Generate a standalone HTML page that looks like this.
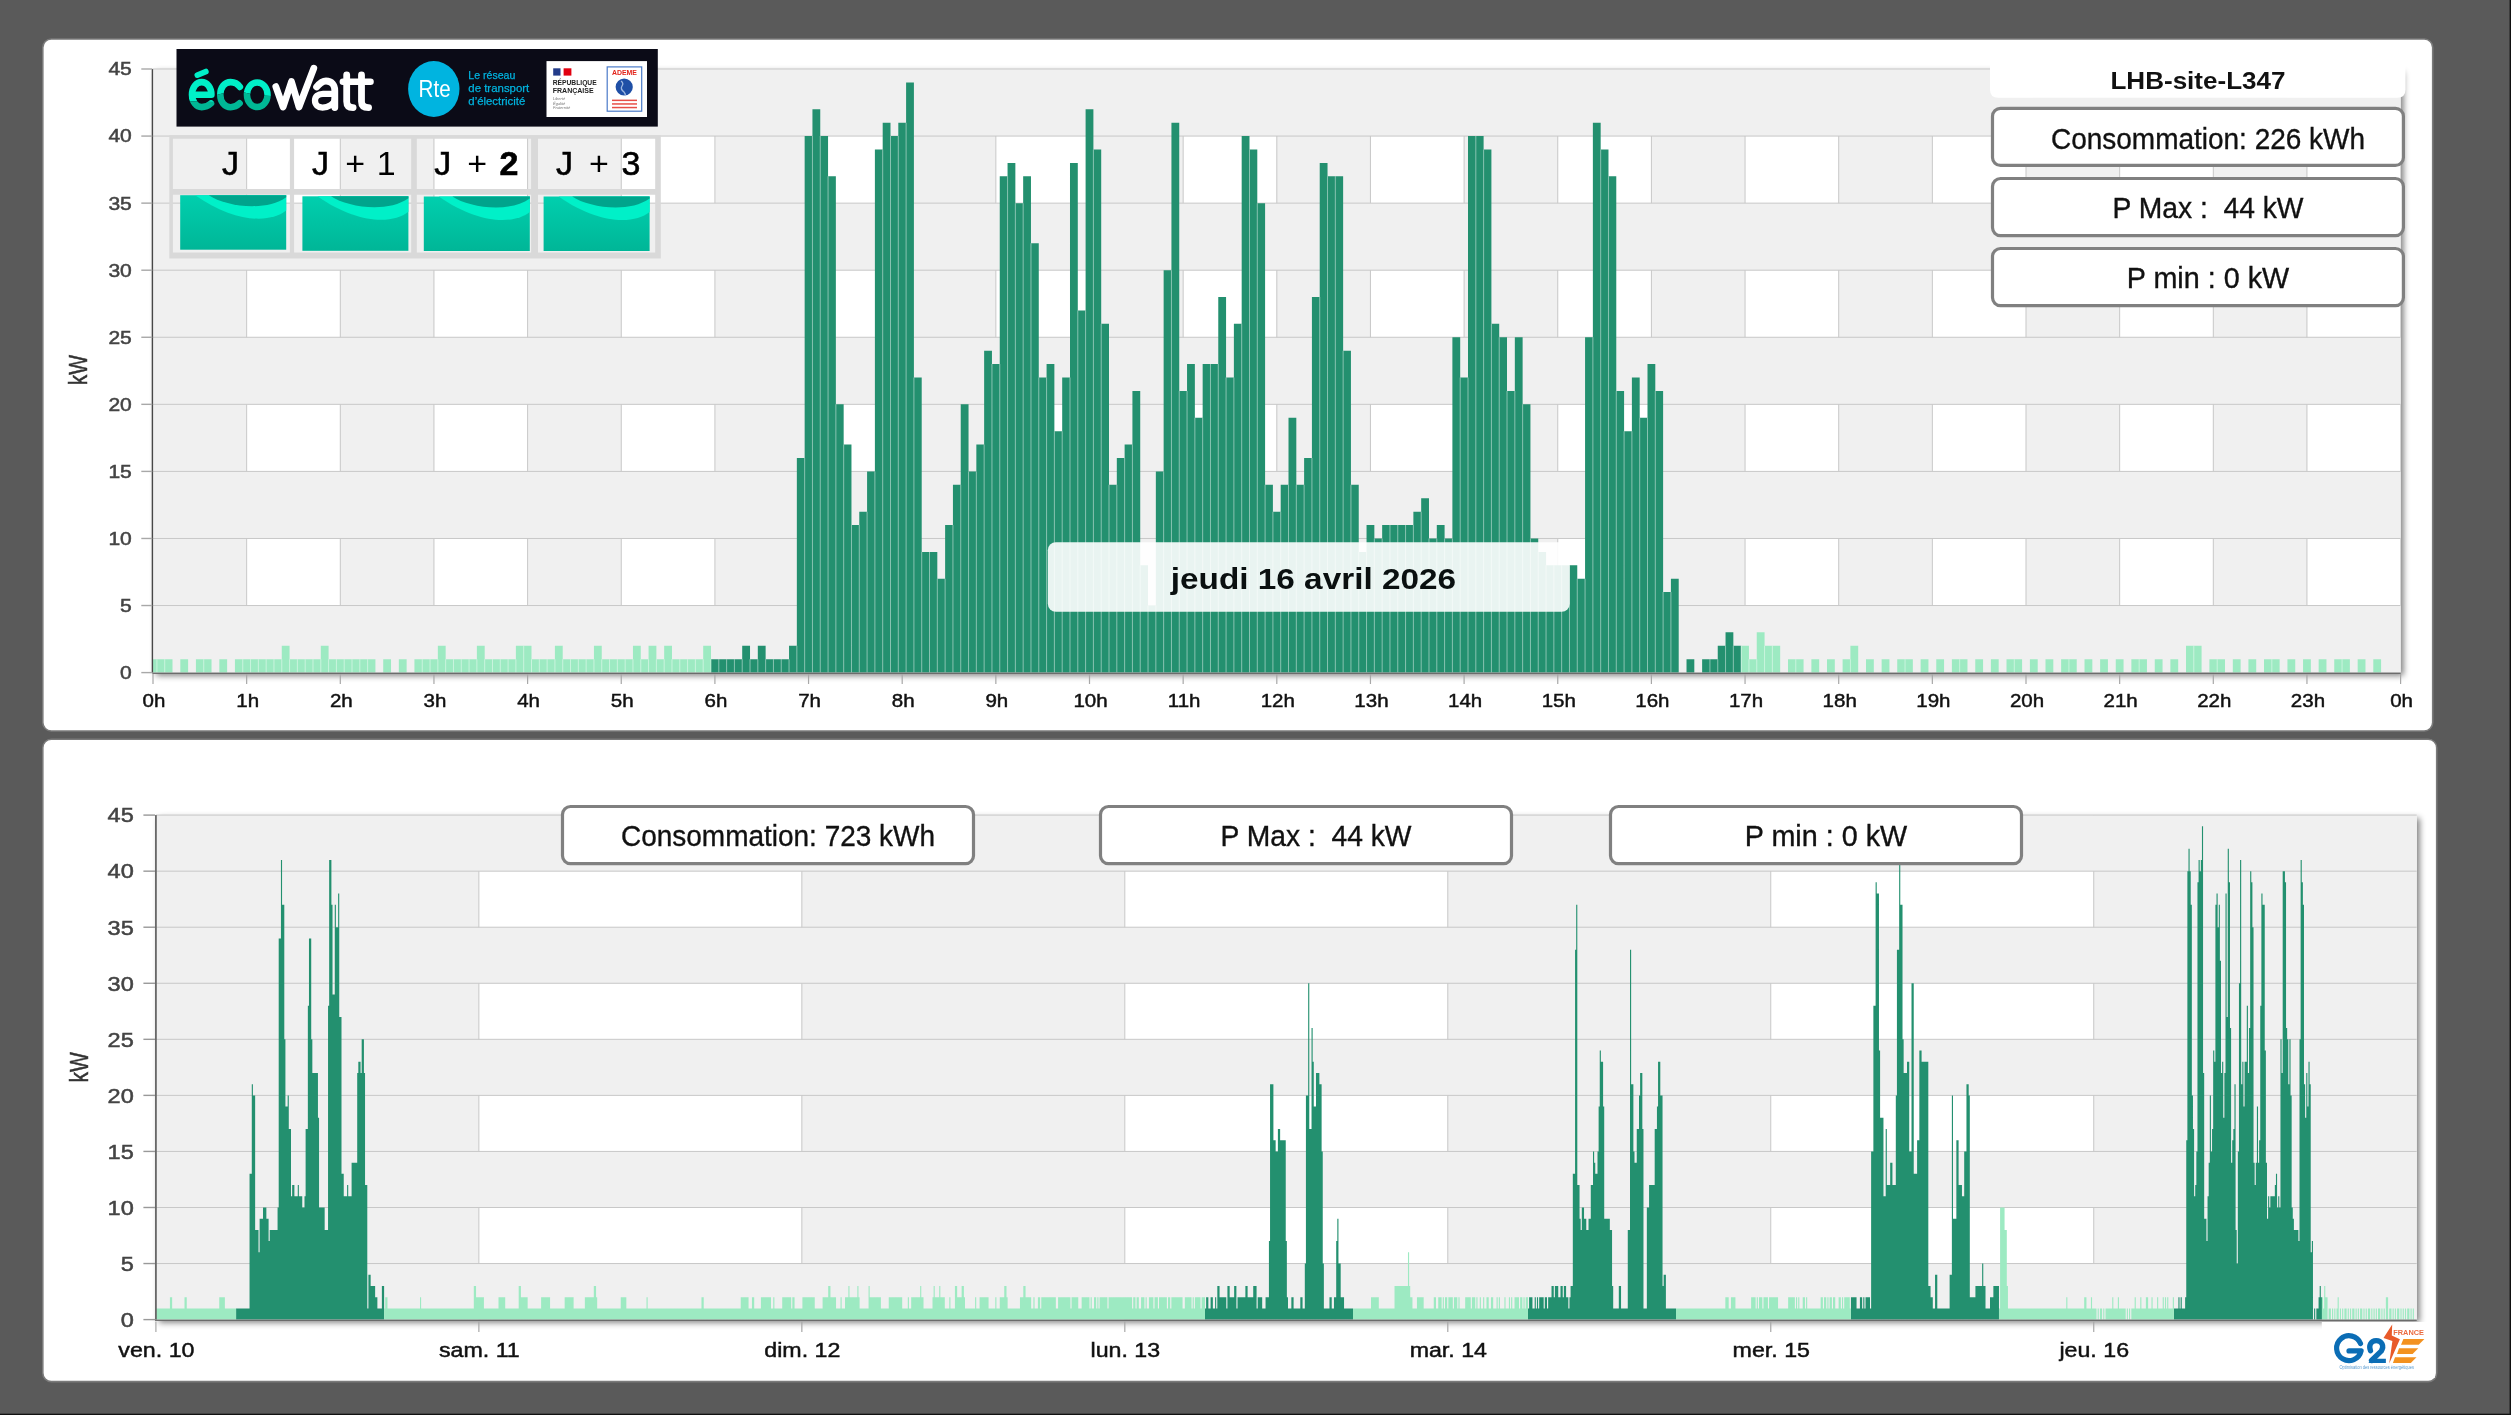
<!DOCTYPE html><html><head><meta charset="utf-8"><title>Consommation</title><style>html,body{margin:0;padding:0;background:#5a5a5a;width:2511px;height:1415px;overflow:hidden}svg{display:block;will-change:transform}text{font-family:"Liberation Sans",sans-serif}</style></head><body>
<svg width="2511" height="1415" viewBox="0 0 2511 1415">
<defs><filter id="sh" x="-5%" y="-50%" width="110%" height="200%"><feGaussianBlur stdDeviation="2"/></filter><filter id="sh3" x="-5%" y="-5%" width="110%" height="110%"><feGaussianBlur stdDeviation="3"/></filter><linearGradient id="tg" x1="0" y1="0" x2="0" y2="1"><stop offset="0" stop-color="#00cfae"/><stop offset="1" stop-color="#00b697"/></linearGradient></defs>
<rect x="0" y="0" width="2511" height="1415" fill="#5a5a5a"/>
<rect x="42.8" y="39" width="2389.9" height="692" rx="8.5" fill="#ffffff" stroke="#7a7a7a" stroke-width="1.6"/>
<rect x="42.8" y="739.3" width="2393.9" height="642.3" rx="8.5" fill="#ffffff" stroke="#7a7a7a" stroke-width="1.6"/>
<rect x="2509.6" y="0" width="1.4" height="1415" fill="#111"/><rect x="0" y="1413.7" width="2511" height="1.3" fill="#111"/>
<rect x="156.0" y="72.0" width="2247.6" height="603.6" fill="#000" opacity="0.5" filter="url(#sh3)"/>
<rect x="153.0" y="69.0" width="2247.6" height="603.6" fill="#ffffff"/>
<rect x="153.00" y="69.0" width="93.65" height="603.60" fill="#f0f0f0"/>
<rect x="340.30" y="69.0" width="93.65" height="603.60" fill="#f0f0f0"/>
<rect x="527.60" y="69.0" width="93.65" height="603.60" fill="#f0f0f0"/>
<rect x="714.90" y="69.0" width="93.65" height="603.60" fill="#f0f0f0"/>
<rect x="902.20" y="69.0" width="93.65" height="603.60" fill="#f0f0f0"/>
<rect x="1089.50" y="69.0" width="93.65" height="603.60" fill="#f0f0f0"/>
<rect x="1276.80" y="69.0" width="93.65" height="603.60" fill="#f0f0f0"/>
<rect x="1464.10" y="69.0" width="93.65" height="603.60" fill="#f0f0f0"/>
<rect x="1651.40" y="69.0" width="93.65" height="603.60" fill="#f0f0f0"/>
<rect x="1838.70" y="69.0" width="93.65" height="603.60" fill="#f0f0f0"/>
<rect x="2026.00" y="69.0" width="93.65" height="603.60" fill="#f0f0f0"/>
<rect x="2213.30" y="69.0" width="93.65" height="603.60" fill="#f0f0f0"/>
<rect x="246.15" y="69.0" width="1" height="603.60" fill="#c8c8c8"/>
<rect x="339.80" y="69.0" width="1" height="603.60" fill="#c8c8c8"/>
<rect x="433.45" y="69.0" width="1" height="603.60" fill="#c8c8c8"/>
<rect x="527.10" y="69.0" width="1" height="603.60" fill="#c8c8c8"/>
<rect x="620.75" y="69.0" width="1" height="603.60" fill="#c8c8c8"/>
<rect x="714.40" y="69.0" width="1" height="603.60" fill="#c8c8c8"/>
<rect x="808.05" y="69.0" width="1" height="603.60" fill="#c8c8c8"/>
<rect x="901.70" y="69.0" width="1" height="603.60" fill="#c8c8c8"/>
<rect x="995.35" y="69.0" width="1" height="603.60" fill="#c8c8c8"/>
<rect x="1089.00" y="69.0" width="1" height="603.60" fill="#c8c8c8"/>
<rect x="1182.65" y="69.0" width="1" height="603.60" fill="#c8c8c8"/>
<rect x="1276.30" y="69.0" width="1" height="603.60" fill="#c8c8c8"/>
<rect x="1369.95" y="69.0" width="1" height="603.60" fill="#c8c8c8"/>
<rect x="1463.60" y="69.0" width="1" height="603.60" fill="#c8c8c8"/>
<rect x="1557.25" y="69.0" width="1" height="603.60" fill="#c8c8c8"/>
<rect x="1650.90" y="69.0" width="1" height="603.60" fill="#c8c8c8"/>
<rect x="1744.55" y="69.0" width="1" height="603.60" fill="#c8c8c8"/>
<rect x="1838.20" y="69.0" width="1" height="603.60" fill="#c8c8c8"/>
<rect x="1931.85" y="69.0" width="1" height="603.60" fill="#c8c8c8"/>
<rect x="2025.50" y="69.0" width="1" height="603.60" fill="#c8c8c8"/>
<rect x="2119.15" y="69.0" width="1" height="603.60" fill="#c8c8c8"/>
<rect x="2212.80" y="69.0" width="1" height="603.60" fill="#c8c8c8"/>
<rect x="2306.45" y="69.0" width="1" height="603.60" fill="#c8c8c8"/>
<rect x="153.0" y="605.53" width="2247.60" height="67.07" fill="#f0f0f0"/>
<rect x="153.0" y="471.40" width="2247.60" height="67.07" fill="#f0f0f0"/>
<rect x="153.0" y="337.27" width="2247.60" height="67.07" fill="#f0f0f0"/>
<rect x="153.0" y="203.13" width="2247.60" height="67.07" fill="#f0f0f0"/>
<rect x="153.0" y="69.00" width="2247.60" height="67.07" fill="#f0f0f0"/>
<rect x="153.0" y="605.03" width="2247.60" height="1" fill="#c8c8c8"/>
<rect x="153.0" y="537.97" width="2247.60" height="1" fill="#c8c8c8"/>
<rect x="153.0" y="470.90" width="2247.60" height="1" fill="#c8c8c8"/>
<rect x="153.0" y="403.83" width="2247.60" height="1" fill="#c8c8c8"/>
<rect x="153.0" y="336.77" width="2247.60" height="1" fill="#c8c8c8"/>
<rect x="153.0" y="269.70" width="2247.60" height="1" fill="#c8c8c8"/>
<rect x="153.0" y="202.63" width="2247.60" height="1" fill="#c8c8c8"/>
<rect x="153.0" y="135.57" width="2247.60" height="1" fill="#c8c8c8"/>
<rect x="153.0" y="68.50" width="2247.60" height="1" fill="#c8c8c8"/>
<path d="M711.00 659.19H718.80V672.6H711.00ZM718.80 659.19H726.61V672.6H718.80ZM726.61 659.19H734.41V672.6H726.61ZM734.41 659.19H742.21V672.6H734.41ZM742.21 645.77H750.02V672.6H742.21ZM750.02 659.19H757.82V672.6H750.02ZM757.82 645.77H765.63V672.6H757.82ZM765.63 659.19H773.43V672.6H765.63ZM773.43 659.19H781.24V672.6H773.43ZM781.24 659.19H789.04V672.6H781.24ZM789.04 645.77H796.84V672.6H789.04ZM796.84 457.99H804.65V672.6H796.84ZM804.65 136.07H812.45V672.6H804.65ZM812.45 109.24H820.26V672.6H812.45ZM820.26 136.07H828.06V672.6H820.26ZM828.06 176.31H835.86V672.6H828.06ZM835.86 404.33H843.67V672.6H835.86ZM843.67 444.57H851.47V672.6H843.67ZM851.47 525.05H859.28V672.6H851.47ZM859.28 511.64H867.08V672.6H859.28ZM867.08 471.40H874.89V672.6H867.08ZM874.89 149.48H882.69V672.6H874.89ZM882.69 122.65H890.49V672.6H882.69ZM890.49 136.07H898.30V672.6H890.49ZM898.30 122.65H906.10V672.6H898.30ZM906.10 82.41H913.91V672.6H906.10ZM913.91 377.51H921.71V672.6H913.91ZM921.71 551.88H929.51V672.6H921.71ZM929.51 551.88H937.32V672.6H929.51ZM937.32 578.71H945.12V672.6H937.32ZM945.12 525.05H952.93V672.6H945.12ZM952.93 484.81H960.73V672.6H952.93ZM960.73 404.33H968.54V672.6H960.73ZM968.54 471.40H976.34V672.6H968.54ZM976.34 444.57H984.14V672.6H976.34ZM984.14 350.68H991.95V672.6H984.14ZM991.95 364.09H999.75V672.6H991.95ZM999.75 176.31H1007.56V672.6H999.75ZM1007.56 162.89H1015.36V672.6H1007.56ZM1015.36 203.13H1023.16V672.6H1015.36ZM1023.16 176.31H1030.97V672.6H1023.16ZM1030.97 243.37H1038.77V672.6H1030.97ZM1038.77 377.51H1046.58V672.6H1038.77ZM1046.58 364.09H1054.38V672.6H1046.58ZM1054.38 431.16H1062.19V672.6H1054.38ZM1062.19 377.51H1069.99V672.6H1062.19ZM1069.99 162.89H1077.79V672.6H1069.99ZM1077.79 310.44H1085.60V672.6H1077.79ZM1085.60 109.24H1093.40V672.6H1085.60ZM1093.40 149.48H1101.21V672.6H1093.40ZM1101.21 323.85H1109.01V672.6H1101.21ZM1109.01 484.81H1116.81V672.6H1109.01ZM1116.81 457.99H1124.62V672.6H1116.81ZM1124.62 444.57H1132.42V672.6H1124.62ZM1132.42 390.92H1140.23V672.6H1132.42ZM1140.23 565.29H1148.03V672.6H1140.23ZM1148.03 605.53H1155.84V672.6H1148.03ZM1155.84 471.40H1163.64V672.6H1155.84ZM1163.64 270.20H1171.44V672.6H1163.64ZM1171.44 122.65H1179.25V672.6H1171.44ZM1179.25 390.92H1187.05V672.6H1179.25ZM1187.05 364.09H1194.86V672.6H1187.05ZM1194.86 417.75H1202.66V672.6H1194.86ZM1202.66 364.09H1210.46V672.6H1202.66ZM1210.46 364.09H1218.27V672.6H1210.46ZM1218.27 297.03H1226.07V672.6H1218.27ZM1226.07 377.51H1233.88V672.6H1226.07ZM1233.88 323.85H1241.68V672.6H1233.88ZM1241.68 136.07H1249.49V672.6H1241.68ZM1249.49 149.48H1257.29V672.6H1249.49ZM1257.29 203.13H1265.09V672.6H1257.29ZM1265.09 484.81H1272.90V672.6H1265.09ZM1272.90 511.64H1280.70V672.6H1272.90ZM1280.70 484.81H1288.51V672.6H1280.70ZM1288.51 417.75H1296.31V672.6H1288.51ZM1296.31 484.81H1304.11V672.6H1296.31ZM1304.11 457.99H1311.92V672.6H1304.11ZM1311.92 297.03H1319.72V672.6H1311.92ZM1319.72 162.89H1327.53V672.6H1319.72ZM1327.53 176.31H1335.33V672.6H1327.53ZM1335.33 176.31H1343.14V672.6H1335.33ZM1343.14 350.68H1350.94V672.6H1343.14ZM1350.94 484.81H1358.74V672.6H1350.94ZM1358.74 551.88H1366.55V672.6H1358.74ZM1366.55 525.05H1374.35V672.6H1366.55ZM1374.35 538.47H1382.16V672.6H1374.35ZM1382.16 525.05H1389.96V672.6H1382.16ZM1389.96 525.05H1397.76V672.6H1389.96ZM1397.76 525.05H1405.57V672.6H1397.76ZM1405.57 525.05H1413.37V672.6H1405.57ZM1413.37 511.64H1421.18V672.6H1413.37ZM1421.18 498.23H1428.98V672.6H1421.18ZM1428.98 538.47H1436.79V672.6H1428.98ZM1436.79 525.05H1444.59V672.6H1436.79ZM1444.59 538.47H1452.39V672.6H1444.59ZM1452.39 337.27H1460.20V672.6H1452.39ZM1460.20 377.51H1468.00V672.6H1460.20ZM1468.00 136.07H1475.81V672.6H1468.00ZM1475.81 136.07H1483.61V672.6H1475.81ZM1483.61 149.48H1491.41V672.6H1483.61ZM1491.41 323.85H1499.22V672.6H1491.41ZM1499.22 337.27H1507.02V672.6H1499.22ZM1507.02 390.92H1514.83V672.6H1507.02ZM1514.83 337.27H1522.63V672.6H1514.83ZM1522.63 404.33H1530.44V672.6H1522.63ZM1530.44 538.47H1538.24V672.6H1530.44ZM1538.24 551.88H1546.04V672.6H1538.24ZM1546.04 565.29H1553.85V672.6H1546.04ZM1553.85 565.29H1561.65V672.6H1553.85ZM1561.65 565.29H1569.46V672.6H1561.65ZM1569.46 565.29H1577.26V672.6H1569.46ZM1577.26 578.71H1585.06V672.6H1577.26ZM1585.06 337.27H1592.87V672.6H1585.06ZM1592.87 122.65H1600.67V672.6H1592.87ZM1600.67 149.48H1608.48V672.6H1600.67ZM1608.48 176.31H1616.28V672.6H1608.48ZM1616.28 390.92H1624.09V672.6H1616.28ZM1624.09 431.16H1631.89V672.6H1624.09ZM1631.89 377.51H1639.69V672.6H1631.89ZM1639.69 417.75H1647.50V672.6H1639.69ZM1647.50 364.09H1655.30V672.6H1647.50ZM1655.30 390.92H1663.11V672.6H1655.30ZM1663.11 592.12H1670.91V672.6H1663.11ZM1670.91 578.71H1678.71V672.6H1670.91ZM1686.52 659.19H1694.32V672.6H1686.52ZM1702.13 659.19H1709.93V672.6H1702.13ZM1709.93 659.19H1717.74V672.6H1709.93ZM1717.74 645.77H1725.54V672.6H1717.74ZM1725.54 632.36H1733.34V672.6H1725.54ZM1733.34 645.77H1741.15V672.6H1733.34Z" fill="#23906f"/>
<path d="M153.00 659.19H156.90V672.6H153.00ZM156.90 659.19H164.71V672.6H156.90ZM164.71 659.19H172.51V672.6H164.71ZM180.31 659.19H188.12V672.6H180.31ZM195.92 659.19H203.73V672.6H195.92ZM203.73 659.19H211.53V672.6H203.73ZM219.34 659.19H227.14V672.6H219.34ZM234.94 659.19H242.75V672.6H234.94ZM242.75 659.19H250.55V672.6H242.75ZM250.55 659.19H258.36V672.6H250.55ZM258.36 659.19H266.16V672.6H258.36ZM266.16 659.19H273.96V672.6H266.16ZM273.96 659.19H281.77V672.6H273.96ZM281.77 645.77H289.57V672.6H281.77ZM289.57 659.19H297.38V672.6H289.57ZM297.38 659.19H305.18V672.6H297.38ZM305.18 659.19H312.99V672.6H305.18ZM312.99 659.19H320.79V672.6H312.99ZM320.79 645.77H328.59V672.6H320.79ZM328.59 659.19H336.40V672.6H328.59ZM336.40 659.19H344.20V672.6H336.40ZM344.20 659.19H352.01V672.6H344.20ZM352.01 659.19H359.81V672.6H352.01ZM359.81 659.19H367.61V672.6H359.81ZM367.61 659.19H375.42V672.6H367.61ZM383.22 659.19H391.03V672.6H383.22ZM398.83 659.19H406.64V672.6H398.83ZM414.44 659.19H422.24V672.6H414.44ZM422.24 659.19H430.05V672.6H422.24ZM430.05 659.19H437.85V672.6H430.05ZM437.85 645.77H445.66V672.6H437.85ZM445.66 659.19H453.46V672.6H445.66ZM453.46 659.19H461.26V672.6H453.46ZM461.26 659.19H469.07V672.6H461.26ZM469.07 659.19H476.87V672.6H469.07ZM476.87 645.77H484.68V672.6H476.87ZM484.68 659.19H492.48V672.6H484.68ZM492.48 659.19H500.29V672.6H492.48ZM500.29 659.19H508.09V672.6H500.29ZM508.09 659.19H515.89V672.6H508.09ZM515.89 645.77H523.70V672.6H515.89ZM523.70 645.77H531.50V672.6H523.70ZM531.50 659.19H539.31V672.6H531.50ZM539.31 659.19H547.11V672.6H539.31ZM547.11 659.19H554.91V672.6H547.11ZM554.91 645.77H562.72V672.6H554.91ZM562.72 659.19H570.52V672.6H562.72ZM570.52 659.19H578.33V672.6H570.52ZM578.33 659.19H586.13V672.6H578.33ZM586.13 659.19H593.94V672.6H586.13ZM593.94 645.77H601.74V672.6H593.94ZM601.74 659.19H609.54V672.6H601.74ZM609.54 659.19H617.35V672.6H609.54ZM617.35 659.19H625.15V672.6H617.35ZM625.15 659.19H632.96V672.6H625.15ZM632.96 645.77H640.76V672.6H632.96ZM640.76 659.19H648.56V672.6H640.76ZM648.56 645.77H656.37V672.6H648.56ZM656.37 659.19H664.17V672.6H656.37ZM664.17 645.77H671.98V672.6H664.17ZM671.98 659.19H679.78V672.6H671.98ZM679.78 659.19H687.59V672.6H679.78ZM687.59 659.19H695.39V672.6H687.59ZM695.39 659.19H703.19V672.6H695.39ZM703.19 645.77H711.00V672.6H703.19ZM1741.15 645.77H1748.95V672.6H1741.15ZM1748.95 659.19H1756.76V672.6H1748.95ZM1756.76 632.36H1764.56V672.6H1756.76ZM1764.56 645.77H1772.36V672.6H1764.56ZM1772.36 645.77H1780.17V672.6H1772.36ZM1787.97 659.19H1795.78V672.6H1787.97ZM1795.78 659.19H1803.58V672.6H1795.78ZM1811.39 659.19H1819.19V672.6H1811.39ZM1826.99 659.19H1834.80V672.6H1826.99ZM1842.60 659.19H1850.41V672.6H1842.60ZM1850.41 645.77H1858.21V672.6H1850.41ZM1866.01 659.19H1873.82V672.6H1866.01ZM1881.62 659.19H1889.43V672.6H1881.62ZM1897.23 659.19H1905.04V672.6H1897.23ZM1905.04 659.19H1912.84V672.6H1905.04ZM1920.64 659.19H1928.45V672.6H1920.64ZM1936.25 659.19H1944.06V672.6H1936.25ZM1951.86 659.19H1959.66V672.6H1951.86ZM1959.66 659.19H1967.47V672.6H1959.66ZM1975.27 659.19H1983.08V672.6H1975.27ZM1990.88 659.19H1998.69V672.6H1990.88ZM2006.49 659.19H2014.29V672.6H2006.49ZM2014.29 659.19H2022.10V672.6H2014.29ZM2029.90 659.19H2037.71V672.6H2029.90ZM2045.51 659.19H2053.31V672.6H2045.51ZM2061.12 659.19H2068.92V672.6H2061.12ZM2068.92 659.19H2076.73V672.6H2068.92ZM2084.53 659.19H2092.34V672.6H2084.53ZM2100.14 659.19H2107.94V672.6H2100.14ZM2115.75 659.19H2123.55V672.6H2115.75ZM2131.36 659.19H2139.16V672.6H2131.36ZM2139.16 659.19H2146.96V672.6H2139.16ZM2154.77 659.19H2162.57V672.6H2154.77ZM2170.38 659.19H2178.18V672.6H2170.38ZM2185.99 645.77H2193.79V672.6H2185.99ZM2193.79 645.77H2201.59V672.6H2193.79ZM2209.40 659.19H2217.20V672.6H2209.40ZM2217.20 659.19H2225.01V672.6H2217.20ZM2232.81 659.19H2240.61V672.6H2232.81ZM2248.42 659.19H2256.22V672.6H2248.42ZM2264.03 659.19H2271.83V672.6H2264.03ZM2271.83 659.19H2279.64V672.6H2271.83ZM2287.44 659.19H2295.24V672.6H2287.44ZM2303.05 659.19H2310.85V672.6H2303.05ZM2318.66 659.19H2326.46V672.6H2318.66ZM2334.26 659.19H2342.07V672.6H2334.26ZM2342.07 659.19H2349.87V672.6H2342.07ZM2357.68 659.19H2365.48V672.6H2357.68ZM2373.29 659.19H2381.09V672.6H2373.29Z" fill="#9deac2"/>
<path d="M156.40 659.19h1V672.6h-1ZM164.21 659.19h1V672.6h-1ZM203.23 659.19h1V672.6h-1ZM242.25 659.19h1V672.6h-1ZM250.05 659.19h1V672.6h-1ZM257.86 659.19h1V672.6h-1ZM265.66 659.19h1V672.6h-1ZM273.46 659.19h1V672.6h-1ZM281.27 659.19h1V672.6h-1ZM289.07 659.19h1V672.6h-1ZM296.88 659.19h1V672.6h-1ZM304.68 659.19h1V672.6h-1ZM312.49 659.19h1V672.6h-1ZM320.29 659.19h1V672.6h-1ZM328.09 659.19h1V672.6h-1ZM335.90 659.19h1V672.6h-1ZM343.70 659.19h1V672.6h-1ZM351.51 659.19h1V672.6h-1ZM359.31 659.19h1V672.6h-1ZM367.11 659.19h1V672.6h-1ZM421.74 659.19h1V672.6h-1ZM429.55 659.19h1V672.6h-1ZM437.35 659.19h1V672.6h-1ZM445.16 659.19h1V672.6h-1ZM452.96 659.19h1V672.6h-1ZM460.76 659.19h1V672.6h-1ZM468.57 659.19h1V672.6h-1ZM476.37 659.19h1V672.6h-1ZM484.18 659.19h1V672.6h-1ZM491.98 659.19h1V672.6h-1ZM499.79 659.19h1V672.6h-1ZM507.59 659.19h1V672.6h-1ZM515.39 659.19h1V672.6h-1ZM523.20 645.77h1V672.6h-1ZM531.00 659.19h1V672.6h-1ZM538.81 659.19h1V672.6h-1ZM546.61 659.19h1V672.6h-1ZM554.41 659.19h1V672.6h-1ZM562.22 659.19h1V672.6h-1ZM570.02 659.19h1V672.6h-1ZM577.83 659.19h1V672.6h-1ZM585.63 659.19h1V672.6h-1ZM593.44 659.19h1V672.6h-1ZM601.24 659.19h1V672.6h-1ZM609.04 659.19h1V672.6h-1ZM616.85 659.19h1V672.6h-1ZM624.65 659.19h1V672.6h-1ZM632.46 659.19h1V672.6h-1ZM640.26 659.19h1V672.6h-1ZM648.06 659.19h1V672.6h-1ZM655.87 659.19h1V672.6h-1ZM663.67 659.19h1V672.6h-1ZM671.48 659.19h1V672.6h-1ZM679.28 659.19h1V672.6h-1ZM687.09 659.19h1V672.6h-1ZM694.89 659.19h1V672.6h-1ZM702.69 659.19h1V672.6h-1ZM710.50 659.19h1V672.6h-1ZM718.30 659.19h1V672.6h-1ZM726.11 659.19h1V672.6h-1ZM733.91 659.19h1V672.6h-1ZM741.71 659.19h1V672.6h-1ZM749.52 659.19h1V672.6h-1ZM757.32 659.19h1V672.6h-1ZM765.13 659.19h1V672.6h-1ZM772.93 659.19h1V672.6h-1ZM780.74 659.19h1V672.6h-1ZM788.54 659.19h1V672.6h-1ZM796.34 645.77h1V672.6h-1ZM804.15 457.99h1V672.6h-1ZM811.95 136.07h1V672.6h-1ZM819.76 136.07h1V672.6h-1ZM827.56 176.31h1V672.6h-1ZM835.36 404.33h1V672.6h-1ZM843.17 444.57h1V672.6h-1ZM850.97 525.05h1V672.6h-1ZM858.78 525.05h1V672.6h-1ZM866.58 511.64h1V672.6h-1ZM874.39 471.40h1V672.6h-1ZM882.19 149.48h1V672.6h-1ZM889.99 136.07h1V672.6h-1ZM897.80 136.07h1V672.6h-1ZM905.60 122.65h1V672.6h-1ZM913.41 377.51h1V672.6h-1ZM921.21 551.88h1V672.6h-1ZM929.01 551.88h1V672.6h-1ZM936.82 578.71h1V672.6h-1ZM944.62 578.71h1V672.6h-1ZM952.43 525.05h1V672.6h-1ZM960.23 484.81h1V672.6h-1ZM968.04 471.40h1V672.6h-1ZM975.84 471.40h1V672.6h-1ZM983.64 444.57h1V672.6h-1ZM991.45 364.09h1V672.6h-1ZM999.25 364.09h1V672.6h-1ZM1007.06 176.31h1V672.6h-1ZM1014.86 203.13h1V672.6h-1ZM1022.66 203.13h1V672.6h-1ZM1030.47 243.37h1V672.6h-1ZM1038.27 377.51h1V672.6h-1ZM1046.08 377.51h1V672.6h-1ZM1053.88 431.16h1V672.6h-1ZM1061.69 431.16h1V672.6h-1ZM1069.49 377.51h1V672.6h-1ZM1077.29 310.44h1V672.6h-1ZM1085.10 310.44h1V672.6h-1ZM1092.90 149.48h1V672.6h-1ZM1100.71 323.85h1V672.6h-1ZM1108.51 484.81h1V672.6h-1ZM1116.31 484.81h1V672.6h-1ZM1124.12 457.99h1V672.6h-1ZM1131.92 444.57h1V672.6h-1ZM1139.73 565.29h1V672.6h-1ZM1147.53 605.53h1V672.6h-1ZM1155.34 605.53h1V672.6h-1ZM1163.14 471.40h1V672.6h-1ZM1170.94 270.20h1V672.6h-1ZM1178.75 390.92h1V672.6h-1ZM1186.55 390.92h1V672.6h-1ZM1194.36 417.75h1V672.6h-1ZM1202.16 417.75h1V672.6h-1ZM1209.96 364.09h1V672.6h-1ZM1217.77 364.09h1V672.6h-1ZM1225.57 377.51h1V672.6h-1ZM1233.38 377.51h1V672.6h-1ZM1241.18 323.85h1V672.6h-1ZM1248.99 149.48h1V672.6h-1ZM1256.79 203.13h1V672.6h-1ZM1264.59 484.81h1V672.6h-1ZM1272.40 511.64h1V672.6h-1ZM1280.20 511.64h1V672.6h-1ZM1288.01 484.81h1V672.6h-1ZM1295.81 484.81h1V672.6h-1ZM1303.61 484.81h1V672.6h-1ZM1311.42 457.99h1V672.6h-1ZM1319.22 297.03h1V672.6h-1ZM1327.03 176.31h1V672.6h-1ZM1334.83 176.31h1V672.6h-1ZM1342.64 350.68h1V672.6h-1ZM1350.44 484.81h1V672.6h-1ZM1358.24 551.88h1V672.6h-1ZM1366.05 551.88h1V672.6h-1ZM1373.85 538.47h1V672.6h-1ZM1381.66 538.47h1V672.6h-1ZM1389.46 525.05h1V672.6h-1ZM1397.26 525.05h1V672.6h-1ZM1405.07 525.05h1V672.6h-1ZM1412.87 525.05h1V672.6h-1ZM1420.68 511.64h1V672.6h-1ZM1428.48 538.47h1V672.6h-1ZM1436.29 538.47h1V672.6h-1ZM1444.09 538.47h1V672.6h-1ZM1451.89 538.47h1V672.6h-1ZM1459.70 377.51h1V672.6h-1ZM1467.50 377.51h1V672.6h-1ZM1475.31 136.07h1V672.6h-1ZM1483.11 149.48h1V672.6h-1ZM1490.91 323.85h1V672.6h-1ZM1498.72 337.27h1V672.6h-1ZM1506.52 390.92h1V672.6h-1ZM1514.33 390.92h1V672.6h-1ZM1522.13 404.33h1V672.6h-1ZM1529.94 538.47h1V672.6h-1ZM1537.74 551.88h1V672.6h-1ZM1545.54 565.29h1V672.6h-1ZM1553.35 565.29h1V672.6h-1ZM1561.15 565.29h1V672.6h-1ZM1568.96 565.29h1V672.6h-1ZM1576.76 578.71h1V672.6h-1ZM1584.56 578.71h1V672.6h-1ZM1592.37 337.27h1V672.6h-1ZM1600.17 149.48h1V672.6h-1ZM1607.98 176.31h1V672.6h-1ZM1615.78 390.92h1V672.6h-1ZM1623.59 431.16h1V672.6h-1ZM1631.39 431.16h1V672.6h-1ZM1639.19 417.75h1V672.6h-1ZM1647.00 417.75h1V672.6h-1ZM1654.80 390.92h1V672.6h-1ZM1662.61 592.12h1V672.6h-1ZM1670.41 592.12h1V672.6h-1ZM1709.43 659.19h1V672.6h-1ZM1717.24 659.19h1V672.6h-1ZM1725.04 645.77h1V672.6h-1ZM1732.84 645.77h1V672.6h-1ZM1740.65 645.77h1V672.6h-1ZM1748.45 659.19h1V672.6h-1ZM1756.26 659.19h1V672.6h-1ZM1764.06 645.77h1V672.6h-1ZM1771.86 645.77h1V672.6h-1ZM1795.28 659.19h1V672.6h-1ZM1849.91 659.19h1V672.6h-1ZM1904.54 659.19h1V672.6h-1ZM1959.16 659.19h1V672.6h-1ZM2013.79 659.19h1V672.6h-1ZM2068.42 659.19h1V672.6h-1ZM2138.66 659.19h1V672.6h-1ZM2193.29 645.77h1V672.6h-1ZM2216.70 659.19h1V672.6h-1ZM2271.33 659.19h1V672.6h-1ZM2341.57 659.19h1V672.6h-1Z" fill="#ffffff" fill-opacity="0.46"/>
<rect x="151.7" y="69.0" width="1.4" height="603.6" fill="#484848"/>
<rect x="141.3" y="671.90" width="11" height="1.4" fill="#a8a8a8"/>
<rect x="141.3" y="604.83" width="11" height="1.4" fill="#a8a8a8"/>
<rect x="141.3" y="537.77" width="11" height="1.4" fill="#a8a8a8"/>
<rect x="141.3" y="470.70" width="11" height="1.4" fill="#a8a8a8"/>
<rect x="141.3" y="403.63" width="11" height="1.4" fill="#a8a8a8"/>
<rect x="141.3" y="336.57" width="11" height="1.4" fill="#a8a8a8"/>
<rect x="141.3" y="269.50" width="11" height="1.4" fill="#a8a8a8"/>
<rect x="141.3" y="202.43" width="11" height="1.4" fill="#a8a8a8"/>
<rect x="141.3" y="135.37" width="11" height="1.4" fill="#a8a8a8"/>
<rect x="141.3" y="68.30" width="11" height="1.4" fill="#a8a8a8"/>
<rect x="152.3" y="672.6" width="2248.2999999999997" height="1.3" fill="#666"/>
<rect x="152.40" y="674" width="1.2" height="10" fill="#a8a8a8"/>
<rect x="246.05" y="674" width="1.2" height="10" fill="#a8a8a8"/>
<rect x="339.70" y="674" width="1.2" height="10" fill="#a8a8a8"/>
<rect x="433.35" y="674" width="1.2" height="10" fill="#a8a8a8"/>
<rect x="527.00" y="674" width="1.2" height="10" fill="#a8a8a8"/>
<rect x="620.65" y="674" width="1.2" height="10" fill="#a8a8a8"/>
<rect x="714.30" y="674" width="1.2" height="10" fill="#a8a8a8"/>
<rect x="807.95" y="674" width="1.2" height="10" fill="#a8a8a8"/>
<rect x="901.60" y="674" width="1.2" height="10" fill="#a8a8a8"/>
<rect x="995.25" y="674" width="1.2" height="10" fill="#a8a8a8"/>
<rect x="1088.90" y="674" width="1.2" height="10" fill="#a8a8a8"/>
<rect x="1182.55" y="674" width="1.2" height="10" fill="#a8a8a8"/>
<rect x="1276.20" y="674" width="1.2" height="10" fill="#a8a8a8"/>
<rect x="1369.85" y="674" width="1.2" height="10" fill="#a8a8a8"/>
<rect x="1463.50" y="674" width="1.2" height="10" fill="#a8a8a8"/>
<rect x="1557.15" y="674" width="1.2" height="10" fill="#a8a8a8"/>
<rect x="1650.80" y="674" width="1.2" height="10" fill="#a8a8a8"/>
<rect x="1744.45" y="674" width="1.2" height="10" fill="#a8a8a8"/>
<rect x="1838.10" y="674" width="1.2" height="10" fill="#a8a8a8"/>
<rect x="1931.75" y="674" width="1.2" height="10" fill="#a8a8a8"/>
<rect x="2025.40" y="674" width="1.2" height="10" fill="#a8a8a8"/>
<rect x="2119.05" y="674" width="1.2" height="10" fill="#a8a8a8"/>
<rect x="2212.70" y="674" width="1.2" height="10" fill="#a8a8a8"/>
<rect x="2306.35" y="674" width="1.2" height="10" fill="#a8a8a8"/>
<rect x="2400.00" y="674" width="1.2" height="10" fill="#a8a8a8"/>
<text transform="translate(131.80,679.00) scale(1.17,1)" x="0" y="0" font-size="18" fill="#444" text-anchor="end" stroke="#444" stroke-width="0.5">0</text>
<text transform="translate(131.80,611.93) scale(1.17,1)" x="0" y="0" font-size="18" fill="#444" text-anchor="end" stroke="#444" stroke-width="0.5">5</text>
<text transform="translate(131.80,544.87) scale(1.17,1)" x="0" y="0" font-size="18" fill="#444" text-anchor="end" stroke="#444" stroke-width="0.5">10</text>
<text transform="translate(131.80,477.80) scale(1.17,1)" x="0" y="0" font-size="18" fill="#444" text-anchor="end" stroke="#444" stroke-width="0.5">15</text>
<text transform="translate(131.80,410.73) scale(1.17,1)" x="0" y="0" font-size="18" fill="#444" text-anchor="end" stroke="#444" stroke-width="0.5">20</text>
<text transform="translate(131.80,343.67) scale(1.17,1)" x="0" y="0" font-size="18" fill="#444" text-anchor="end" stroke="#444" stroke-width="0.5">25</text>
<text transform="translate(131.80,276.60) scale(1.17,1)" x="0" y="0" font-size="18" fill="#444" text-anchor="end" stroke="#444" stroke-width="0.5">30</text>
<text transform="translate(131.80,209.53) scale(1.17,1)" x="0" y="0" font-size="18" fill="#444" text-anchor="end" stroke="#444" stroke-width="0.5">35</text>
<text transform="translate(131.80,142.47) scale(1.17,1)" x="0" y="0" font-size="18" fill="#444" text-anchor="end" stroke="#444" stroke-width="0.5">40</text>
<text transform="translate(131.80,75.40) scale(1.17,1)" x="0" y="0" font-size="18" fill="#444" text-anchor="end" stroke="#444" stroke-width="0.5">45</text>
<text transform="translate(154.00,707.00) scale(1.14,1)" x="0" y="0" font-size="18" fill="#111" text-anchor="middle" stroke="#111" stroke-width="0.45">0h</text>
<text transform="translate(247.65,707.00) scale(1.14,1)" x="0" y="0" font-size="18" fill="#111" text-anchor="middle" stroke="#111" stroke-width="0.45">1h</text>
<text transform="translate(341.30,707.00) scale(1.14,1)" x="0" y="0" font-size="18" fill="#111" text-anchor="middle" stroke="#111" stroke-width="0.45">2h</text>
<text transform="translate(434.95,707.00) scale(1.14,1)" x="0" y="0" font-size="18" fill="#111" text-anchor="middle" stroke="#111" stroke-width="0.45">3h</text>
<text transform="translate(528.60,707.00) scale(1.14,1)" x="0" y="0" font-size="18" fill="#111" text-anchor="middle" stroke="#111" stroke-width="0.45">4h</text>
<text transform="translate(622.25,707.00) scale(1.14,1)" x="0" y="0" font-size="18" fill="#111" text-anchor="middle" stroke="#111" stroke-width="0.45">5h</text>
<text transform="translate(715.90,707.00) scale(1.14,1)" x="0" y="0" font-size="18" fill="#111" text-anchor="middle" stroke="#111" stroke-width="0.45">6h</text>
<text transform="translate(809.55,707.00) scale(1.14,1)" x="0" y="0" font-size="18" fill="#111" text-anchor="middle" stroke="#111" stroke-width="0.45">7h</text>
<text transform="translate(903.20,707.00) scale(1.14,1)" x="0" y="0" font-size="18" fill="#111" text-anchor="middle" stroke="#111" stroke-width="0.45">8h</text>
<text transform="translate(996.85,707.00) scale(1.14,1)" x="0" y="0" font-size="18" fill="#111" text-anchor="middle" stroke="#111" stroke-width="0.45">9h</text>
<text transform="translate(1090.50,707.00) scale(1.14,1)" x="0" y="0" font-size="18" fill="#111" text-anchor="middle" stroke="#111" stroke-width="0.45">10h</text>
<text transform="translate(1184.15,707.00) scale(1.14,1)" x="0" y="0" font-size="18" fill="#111" text-anchor="middle" stroke="#111" stroke-width="0.45">11h</text>
<text transform="translate(1277.80,707.00) scale(1.14,1)" x="0" y="0" font-size="18" fill="#111" text-anchor="middle" stroke="#111" stroke-width="0.45">12h</text>
<text transform="translate(1371.45,707.00) scale(1.14,1)" x="0" y="0" font-size="18" fill="#111" text-anchor="middle" stroke="#111" stroke-width="0.45">13h</text>
<text transform="translate(1465.10,707.00) scale(1.14,1)" x="0" y="0" font-size="18" fill="#111" text-anchor="middle" stroke="#111" stroke-width="0.45">14h</text>
<text transform="translate(1558.75,707.00) scale(1.14,1)" x="0" y="0" font-size="18" fill="#111" text-anchor="middle" stroke="#111" stroke-width="0.45">15h</text>
<text transform="translate(1652.40,707.00) scale(1.14,1)" x="0" y="0" font-size="18" fill="#111" text-anchor="middle" stroke="#111" stroke-width="0.45">16h</text>
<text transform="translate(1746.05,707.00) scale(1.14,1)" x="0" y="0" font-size="18" fill="#111" text-anchor="middle" stroke="#111" stroke-width="0.45">17h</text>
<text transform="translate(1839.70,707.00) scale(1.14,1)" x="0" y="0" font-size="18" fill="#111" text-anchor="middle" stroke="#111" stroke-width="0.45">18h</text>
<text transform="translate(1933.35,707.00) scale(1.14,1)" x="0" y="0" font-size="18" fill="#111" text-anchor="middle" stroke="#111" stroke-width="0.45">19h</text>
<text transform="translate(2027.00,707.00) scale(1.14,1)" x="0" y="0" font-size="18" fill="#111" text-anchor="middle" stroke="#111" stroke-width="0.45">20h</text>
<text transform="translate(2120.65,707.00) scale(1.14,1)" x="0" y="0" font-size="18" fill="#111" text-anchor="middle" stroke="#111" stroke-width="0.45">21h</text>
<text transform="translate(2214.30,707.00) scale(1.14,1)" x="0" y="0" font-size="18" fill="#111" text-anchor="middle" stroke="#111" stroke-width="0.45">22h</text>
<text transform="translate(2307.95,707.00) scale(1.14,1)" x="0" y="0" font-size="18" fill="#111" text-anchor="middle" stroke="#111" stroke-width="0.45">23h</text>
<text transform="translate(2401.60,707.00) scale(1.14,1)" x="0" y="0" font-size="18" fill="#111" text-anchor="middle" stroke="#111" stroke-width="0.45">0h</text>
<text transform="translate(87.4,370.1) rotate(-90) scale(1.05,1.3)" x="0" y="0" font-size="20" fill="#333" stroke="#333" stroke-width="0.35" text-anchor="middle">kW</text>
<rect x="158.9" y="818.1" width="2260.7999999999997" height="504.4999999999999" fill="#000" opacity="0.5" filter="url(#sh3)"/>
<rect x="155.9" y="815.1" width="2260.7999999999997" height="504.4999999999999" fill="#ffffff"/>
<rect x="155.90" y="815.1" width="322.97" height="504.50" fill="#f0f0f0"/>
<rect x="801.84" y="815.1" width="322.97" height="504.50" fill="#f0f0f0"/>
<rect x="1447.79" y="815.1" width="322.97" height="504.50" fill="#f0f0f0"/>
<rect x="2093.73" y="815.1" width="322.97" height="504.50" fill="#f0f0f0"/>
<rect x="478.37" y="815.1" width="1" height="504.50" fill="#c8c8c8"/>
<rect x="801.34" y="815.1" width="1" height="504.50" fill="#c8c8c8"/>
<rect x="1124.31" y="815.1" width="1" height="504.50" fill="#c8c8c8"/>
<rect x="1447.29" y="815.1" width="1" height="504.50" fill="#c8c8c8"/>
<rect x="1770.26" y="815.1" width="1" height="504.50" fill="#c8c8c8"/>
<rect x="2093.23" y="815.1" width="1" height="504.50" fill="#c8c8c8"/>
<rect x="155.9" y="1263.54" width="2260.80" height="56.06" fill="#f0f0f0"/>
<rect x="155.9" y="1151.43" width="2260.80" height="56.06" fill="#f0f0f0"/>
<rect x="155.9" y="1039.32" width="2260.80" height="56.06" fill="#f0f0f0"/>
<rect x="155.9" y="927.21" width="2260.80" height="56.06" fill="#f0f0f0"/>
<rect x="155.9" y="815.10" width="2260.80" height="56.06" fill="#f0f0f0"/>
<rect x="155.9" y="1263.04" width="2260.80" height="1" fill="#c8c8c8"/>
<rect x="155.9" y="1206.99" width="2260.80" height="1" fill="#c8c8c8"/>
<rect x="155.9" y="1150.93" width="2260.80" height="1" fill="#c8c8c8"/>
<rect x="155.9" y="1094.88" width="2260.80" height="1" fill="#c8c8c8"/>
<rect x="155.9" y="1038.82" width="2260.80" height="1" fill="#c8c8c8"/>
<rect x="155.9" y="982.77" width="2260.80" height="1" fill="#c8c8c8"/>
<rect x="155.9" y="926.71" width="2260.80" height="1" fill="#c8c8c8"/>
<rect x="155.9" y="870.66" width="2260.80" height="1" fill="#c8c8c8"/>
<rect x="155.9" y="814.60" width="2260.80" height="1" fill="#c8c8c8"/>
<path d="M236.08 1308.39H237.20V1319.6H236.08ZM237.20 1308.39H238.32V1319.6H237.20ZM238.32 1308.39H239.45V1319.6H238.32ZM239.45 1308.39H240.57V1319.6H239.45ZM240.57 1308.39H241.69V1319.6H240.57ZM241.69 1308.39H242.81V1319.6H241.69ZM242.81 1308.39H243.93V1319.6H242.81ZM243.93 1308.39H245.05V1319.6H243.93ZM245.05 1308.39H246.17V1319.6H245.05ZM246.17 1308.39H247.30V1319.6H246.17ZM247.30 1308.39H248.42V1319.6H247.30ZM248.42 1308.39H249.54V1319.6H248.42ZM249.54 1173.86H250.66V1319.6H249.54ZM250.66 1173.86H251.78V1319.6H250.66ZM251.78 1084.17H252.90V1319.6H251.78ZM252.90 1095.38H254.03V1319.6H252.90ZM254.03 1095.38H255.15V1319.6H254.03ZM255.15 1229.91H256.27V1319.6H255.15ZM256.27 1229.91H257.39V1319.6H256.27ZM257.39 1229.91H258.51V1319.6H257.39ZM258.51 1252.33H259.63V1319.6H258.51ZM259.63 1218.70H260.75V1319.6H259.63ZM260.75 1218.70H261.87V1319.6H260.75ZM261.87 1218.70H263.00V1319.6H261.87ZM263.00 1207.49H264.12V1319.6H263.00ZM264.12 1207.49H265.24V1319.6H264.12ZM265.24 1207.49H266.36V1319.6H265.24ZM266.36 1218.70H267.48V1319.6H266.36ZM267.48 1218.70H268.60V1319.6H267.48ZM268.60 1241.12H269.72V1319.6H268.60ZM269.72 1229.91H270.85V1319.6H269.72ZM270.85 1229.91H271.97V1319.6H270.85ZM271.97 1229.91H273.09V1319.6H271.97ZM273.09 1229.91H274.21V1319.6H273.09ZM274.21 1229.91H275.33V1319.6H274.21ZM275.33 1229.91H276.45V1319.6H275.33ZM276.45 1229.91H277.57V1319.6H276.45ZM277.57 1207.49H278.70V1319.6H277.57ZM278.70 938.42H279.82V1319.6H278.70ZM279.82 938.42H280.94V1319.6H279.82ZM280.94 859.94H282.06V1319.6H280.94ZM282.06 904.79H283.18V1319.6H282.06ZM283.18 904.79H284.30V1319.6H283.18ZM284.30 1039.32H285.42V1319.6H284.30ZM285.42 1106.59H286.55V1319.6H285.42ZM286.55 1106.59H287.67V1319.6H286.55ZM287.67 1095.38H288.79V1319.6H287.67ZM288.79 1129.01H289.91V1319.6H288.79ZM289.91 1129.01H291.03V1319.6H289.91ZM291.03 1196.28H292.15V1319.6H291.03ZM292.15 1185.07H293.27V1319.6H292.15ZM293.27 1185.07H294.40V1319.6H293.27ZM294.40 1196.28H295.52V1319.6H294.40ZM295.52 1196.28H296.64V1319.6H295.52ZM296.64 1196.28H297.76V1319.6H296.64ZM297.76 1185.07H298.88V1319.6H297.76ZM298.88 1196.28H300.00V1319.6H298.88ZM300.00 1196.28H301.12V1319.6H300.00ZM301.12 1196.28H302.25V1319.6H301.12ZM302.25 1207.49H303.37V1319.6H302.25ZM303.37 1207.49H304.49V1319.6H303.37ZM304.49 1196.28H305.61V1319.6H304.49ZM305.61 1129.01H306.73V1319.6H305.61ZM306.73 1129.01H307.85V1319.6H306.73ZM307.85 1005.69H308.97V1319.6H307.85ZM308.97 938.42H310.10V1319.6H308.97ZM310.10 938.42H311.22V1319.6H310.10ZM311.22 1039.32H312.34V1319.6H311.22ZM312.34 1072.96H313.46V1319.6H312.34ZM313.46 1072.96H314.58V1319.6H313.46ZM314.58 1072.96H315.70V1319.6H314.58ZM315.70 1072.96H316.82V1319.6H315.70ZM316.82 1072.96H317.95V1319.6H316.82ZM317.95 1117.80H319.07V1319.6H317.95ZM319.07 1207.49H320.19V1319.6H319.07ZM320.19 1207.49H321.31V1319.6H320.19ZM321.31 1207.49H322.43V1319.6H321.31ZM322.43 1207.49H323.55V1319.6H322.43ZM323.55 1207.49H324.67V1319.6H323.55ZM324.67 1229.91H325.80V1319.6H324.67ZM325.80 1229.91H326.92V1319.6H325.80ZM326.92 1229.91H328.04V1319.6H326.92ZM328.04 1005.69H329.16V1319.6H328.04ZM329.16 859.94H330.28V1319.6H329.16ZM330.28 859.94H331.40V1319.6H330.28ZM331.40 904.79H332.52V1319.6H331.40ZM332.52 994.48H333.65V1319.6H332.52ZM333.65 994.48H334.77V1319.6H333.65ZM334.77 904.79H335.89V1319.6H334.77ZM335.89 927.21H337.01V1319.6H335.89ZM337.01 927.21H338.13V1319.6H337.01ZM338.13 893.58H339.25V1319.6H338.13ZM339.25 1016.90H340.37V1319.6H339.25ZM340.37 1016.90H341.50V1319.6H340.37ZM341.50 1173.86H342.62V1319.6H341.50ZM342.62 1173.86H343.74V1319.6H342.62ZM343.74 1196.28H344.86V1319.6H343.74ZM344.86 1196.28H345.98V1319.6H344.86ZM345.98 1196.28H347.10V1319.6H345.98ZM347.10 1185.07H348.22V1319.6H347.10ZM348.22 1196.28H349.35V1319.6H348.22ZM349.35 1196.28H350.47V1319.6H349.35ZM350.47 1196.28H351.59V1319.6H350.47ZM351.59 1162.64H352.71V1319.6H351.59ZM352.71 1162.64H353.83V1319.6H352.71ZM353.83 1162.64H354.95V1319.6H353.83ZM354.95 1162.64H356.07V1319.6H354.95ZM356.07 1162.64H357.20V1319.6H356.07ZM357.20 1072.96H358.32V1319.6H357.20ZM358.32 1061.74H359.44V1319.6H358.32ZM359.44 1061.74H360.56V1319.6H359.44ZM360.56 1072.96H361.68V1319.6H360.56ZM361.68 1039.32H362.80V1319.6H361.68ZM362.80 1039.32H363.92V1319.6H362.80ZM363.92 1072.96H365.05V1319.6H363.92ZM365.05 1185.07H366.17V1319.6H365.05ZM366.17 1185.07H367.29V1319.6H366.17ZM367.29 1308.39H368.41V1319.6H367.29ZM368.41 1274.76H369.53V1319.6H368.41ZM369.53 1274.76H370.65V1319.6H369.53ZM370.65 1285.97H371.77V1319.6H370.65ZM371.77 1285.97H372.90V1319.6H371.77ZM372.90 1285.97H374.02V1319.6H372.90ZM374.02 1285.97H375.14V1319.6H374.02ZM375.14 1297.18H376.26V1319.6H375.14ZM376.26 1297.18H377.38V1319.6H376.26ZM377.38 1308.39H378.50V1319.6H377.38ZM378.50 1308.39H379.62V1319.6H378.50ZM379.62 1308.39H380.75V1319.6H379.62ZM380.75 1308.39H381.87V1319.6H380.75ZM381.87 1285.97H382.99V1319.6H381.87ZM382.99 1285.97H384.11V1319.6H382.99ZM1205.00 1308.39H1206.12V1319.6H1205.00ZM1206.12 1297.18H1207.24V1319.6H1206.12ZM1207.24 1297.18H1208.36V1319.6H1207.24ZM1208.36 1308.39H1209.48V1319.6H1208.36ZM1209.48 1308.39H1210.60V1319.6H1209.48ZM1210.60 1297.18H1211.72V1319.6H1210.60ZM1211.72 1297.18H1212.85V1319.6H1211.72ZM1212.85 1308.39H1213.97V1319.6H1212.85ZM1213.97 1308.39H1215.09V1319.6H1213.97ZM1215.09 1297.18H1216.21V1319.6H1215.09ZM1216.21 1308.39H1217.33V1319.6H1216.21ZM1217.33 1285.97H1218.45V1319.6H1217.33ZM1218.45 1285.97H1219.57V1319.6H1218.45ZM1219.57 1297.18H1220.70V1319.6H1219.57ZM1220.70 1297.18H1221.82V1319.6H1220.70ZM1221.82 1297.18H1222.94V1319.6H1221.82ZM1222.94 1297.18H1224.06V1319.6H1222.94ZM1224.06 1297.18H1225.18V1319.6H1224.06ZM1225.18 1297.18H1226.30V1319.6H1225.18ZM1226.30 1308.39H1227.42V1319.6H1226.30ZM1227.42 1285.97H1228.55V1319.6H1227.42ZM1228.55 1285.97H1229.67V1319.6H1228.55ZM1229.67 1297.18H1230.79V1319.6H1229.67ZM1230.79 1297.18H1231.91V1319.6H1230.79ZM1231.91 1297.18H1233.03V1319.6H1231.91ZM1233.03 1297.18H1234.15V1319.6H1233.03ZM1234.15 1285.97H1235.27V1319.6H1234.15ZM1235.27 1285.97H1236.40V1319.6H1235.27ZM1236.40 1308.39H1237.52V1319.6H1236.40ZM1237.52 1297.18H1238.64V1319.6H1237.52ZM1238.64 1297.18H1239.76V1319.6H1238.64ZM1239.76 1297.18H1240.88V1319.6H1239.76ZM1240.88 1297.18H1242.00V1319.6H1240.88ZM1242.00 1297.18H1243.12V1319.6H1242.00ZM1243.12 1297.18H1244.25V1319.6H1243.12ZM1244.25 1297.18H1245.37V1319.6H1244.25ZM1245.37 1285.97H1246.49V1319.6H1245.37ZM1246.49 1285.97H1247.61V1319.6H1246.49ZM1247.61 1297.18H1248.73V1319.6H1247.61ZM1248.73 1297.18H1249.85V1319.6H1248.73ZM1249.85 1297.18H1250.97V1319.6H1249.85ZM1250.97 1297.18H1252.10V1319.6H1250.97ZM1252.10 1297.18H1253.22V1319.6H1252.10ZM1253.22 1285.97H1254.34V1319.6H1253.22ZM1254.34 1285.97H1255.46V1319.6H1254.34ZM1255.46 1285.97H1256.58V1319.6H1255.46ZM1256.58 1308.39H1257.70V1319.6H1256.58ZM1257.70 1297.18H1258.82V1319.6H1257.70ZM1258.82 1297.18H1259.95V1319.6H1258.82ZM1259.95 1297.18H1261.07V1319.6H1259.95ZM1261.07 1297.18H1262.19V1319.6H1261.07ZM1262.19 1308.39H1263.31V1319.6H1262.19ZM1263.31 1308.39H1264.43V1319.6H1263.31ZM1264.43 1308.39H1265.55V1319.6H1264.43ZM1265.55 1297.18H1266.67V1319.6H1265.55ZM1266.67 1297.18H1267.80V1319.6H1266.67ZM1267.80 1297.18H1268.92V1319.6H1267.80ZM1268.92 1241.12H1270.04V1319.6H1268.92ZM1270.04 1084.17H1271.16V1319.6H1270.04ZM1271.16 1084.17H1272.28V1319.6H1271.16ZM1272.28 1084.17H1273.40V1319.6H1272.28ZM1273.40 1140.22H1274.52V1319.6H1273.40ZM1274.52 1140.22H1275.65V1319.6H1274.52ZM1275.65 1151.43H1276.77V1319.6H1275.65ZM1276.77 1151.43H1277.89V1319.6H1276.77ZM1277.89 1129.01H1279.01V1319.6H1277.89ZM1279.01 1129.01H1280.13V1319.6H1279.01ZM1280.13 1140.22H1281.25V1319.6H1280.13ZM1281.25 1140.22H1282.38V1319.6H1281.25ZM1282.37 1140.22H1283.50V1319.6H1282.37ZM1283.50 1140.22H1284.62V1319.6H1283.50ZM1284.62 1140.22H1285.74V1319.6H1284.62ZM1285.74 1241.12H1286.86V1319.6H1285.74ZM1286.86 1297.18H1287.98V1319.6H1286.86ZM1287.98 1308.39H1289.10V1319.6H1287.98ZM1289.10 1308.39H1290.22V1319.6H1289.10ZM1290.22 1308.39H1291.35V1319.6H1290.22ZM1291.35 1297.18H1292.47V1319.6H1291.35ZM1292.47 1297.18H1293.59V1319.6H1292.47ZM1293.59 1308.39H1294.71V1319.6H1293.59ZM1294.71 1308.39H1295.83V1319.6H1294.71ZM1295.83 1308.39H1296.95V1319.6H1295.83ZM1296.95 1308.39H1298.07V1319.6H1296.95ZM1298.07 1308.39H1299.20V1319.6H1298.07ZM1299.20 1308.39H1300.32V1319.6H1299.20ZM1300.32 1297.18H1301.44V1319.6H1300.32ZM1301.44 1297.18H1302.56V1319.6H1301.44ZM1302.56 1308.39H1303.68V1319.6H1302.56ZM1303.68 1308.39H1304.80V1319.6H1303.68ZM1304.80 1263.54H1305.92V1319.6H1304.80ZM1305.92 1095.38H1307.05V1319.6H1305.92ZM1307.05 1095.38H1308.17V1319.6H1307.05ZM1308.17 983.27H1309.29V1319.6H1308.17ZM1309.29 1129.01H1310.41V1319.6H1309.29ZM1310.41 1129.01H1311.53V1319.6H1310.41ZM1311.53 1028.11H1312.65V1319.6H1311.53ZM1312.65 1061.74H1313.77V1319.6H1312.65ZM1313.77 1106.59H1314.90V1319.6H1313.77ZM1314.90 1106.59H1316.02V1319.6H1314.90ZM1316.02 1072.96H1317.14V1319.6H1316.02ZM1317.14 1072.96H1318.26V1319.6H1317.14ZM1318.26 1072.96H1319.38V1319.6H1318.26ZM1319.38 1084.17H1320.50V1319.6H1319.38ZM1320.50 1084.17H1321.62V1319.6H1320.50ZM1321.62 1151.43H1322.75V1319.6H1321.62ZM1322.75 1263.54H1323.87V1319.6H1322.75ZM1323.87 1308.39H1324.99V1319.6H1323.87ZM1324.99 1308.39H1326.11V1319.6H1324.99ZM1326.11 1308.39H1327.23V1319.6H1326.11ZM1327.23 1308.39H1328.35V1319.6H1327.23ZM1328.35 1308.39H1329.47V1319.6H1328.35ZM1329.47 1297.18H1330.60V1319.6H1329.47ZM1330.60 1297.18H1331.72V1319.6H1330.60ZM1331.72 1308.39H1332.84V1319.6H1331.72ZM1332.84 1308.39H1333.96V1319.6H1332.84ZM1333.96 1297.18H1335.08V1319.6H1333.96ZM1335.08 1297.18H1336.20V1319.6H1335.08ZM1336.20 1241.12H1337.32V1319.6H1336.20ZM1337.32 1218.70H1338.45V1319.6H1337.32ZM1338.45 1263.54H1339.57V1319.6H1338.45ZM1339.57 1263.54H1340.69V1319.6H1339.57ZM1340.69 1297.18H1341.81V1319.6H1340.69ZM1341.81 1297.18H1342.93V1319.6H1341.81ZM1342.93 1297.18H1344.05V1319.6H1342.93ZM1344.05 1308.39H1345.17V1319.6H1344.05ZM1345.17 1308.39H1346.30V1319.6H1345.17ZM1346.30 1308.39H1347.42V1319.6H1346.30ZM1347.42 1308.39H1348.54V1319.6H1347.42ZM1348.54 1308.39H1349.66V1319.6H1348.54ZM1349.66 1308.39H1350.78V1319.6H1349.66ZM1350.78 1308.39H1351.90V1319.6H1350.78ZM1351.90 1308.39H1353.02V1319.6H1351.90ZM1527.97 1308.39H1529.09V1319.6H1527.97ZM1529.09 1297.18H1530.21V1319.6H1529.09ZM1530.21 1297.18H1531.33V1319.6H1530.21ZM1531.33 1297.18H1532.45V1319.6H1531.33ZM1532.45 1308.39H1533.57V1319.6H1532.45ZM1533.57 1308.39H1534.70V1319.6H1533.57ZM1534.70 1297.18H1535.82V1319.6H1534.70ZM1535.82 1308.39H1536.94V1319.6H1535.82ZM1536.94 1297.18H1538.06V1319.6H1536.94ZM1538.06 1308.39H1539.18V1319.6H1538.06ZM1539.18 1297.18H1540.30V1319.6H1539.18ZM1540.30 1297.18H1541.42V1319.6H1540.30ZM1541.42 1297.18H1542.55V1319.6H1541.42ZM1542.55 1297.18H1543.67V1319.6H1542.55ZM1543.67 1308.39H1544.79V1319.6H1543.67ZM1544.79 1297.18H1545.91V1319.6H1544.79ZM1545.91 1297.18H1547.03V1319.6H1545.91ZM1547.03 1308.39H1548.15V1319.6H1547.03ZM1548.15 1297.18H1549.27V1319.6H1548.15ZM1549.27 1297.18H1550.40V1319.6H1549.27ZM1550.40 1297.18H1551.52V1319.6H1550.40ZM1551.52 1285.97H1552.64V1319.6H1551.52ZM1552.64 1285.97H1553.76V1319.6H1552.64ZM1553.76 1297.18H1554.88V1319.6H1553.76ZM1554.88 1285.97H1556.00V1319.6H1554.88ZM1556.00 1285.97H1557.12V1319.6H1556.00ZM1557.12 1285.97H1558.25V1319.6H1557.12ZM1558.25 1297.18H1559.37V1319.6H1558.25ZM1559.37 1297.18H1560.49V1319.6H1559.37ZM1560.49 1285.97H1561.61V1319.6H1560.49ZM1561.61 1285.97H1562.73V1319.6H1561.61ZM1562.73 1297.18H1563.85V1319.6H1562.73ZM1563.85 1285.97H1564.97V1319.6H1563.85ZM1564.97 1285.97H1566.10V1319.6H1564.97ZM1566.10 1297.18H1567.22V1319.6H1566.10ZM1567.22 1297.18H1568.34V1319.6H1567.22ZM1568.34 1308.39H1569.46V1319.6H1568.34ZM1569.46 1297.18H1570.58V1319.6H1569.46ZM1570.58 1285.97H1571.70V1319.6H1570.58ZM1571.70 1285.97H1572.82V1319.6H1571.70ZM1572.82 1173.86H1573.95V1319.6H1572.82ZM1573.95 1173.86H1575.07V1319.6H1573.95ZM1575.07 949.63H1576.19V1319.6H1575.07ZM1576.19 904.79H1577.31V1319.6H1576.19ZM1577.31 1185.07H1578.43V1319.6H1577.31ZM1578.43 1185.07H1579.55V1319.6H1578.43ZM1579.55 1218.70H1580.67V1319.6H1579.55ZM1580.67 1229.91H1581.80V1319.6H1580.67ZM1581.80 1207.49H1582.92V1319.6H1581.80ZM1582.92 1207.49H1584.04V1319.6H1582.92ZM1584.04 1218.70H1585.16V1319.6H1584.04ZM1585.16 1218.70H1586.28V1319.6H1585.16ZM1586.28 1229.91H1587.40V1319.6H1586.28ZM1587.40 1229.91H1588.52V1319.6H1587.40ZM1588.52 1218.70H1589.65V1319.6H1588.52ZM1589.65 1218.70H1590.77V1319.6H1589.65ZM1590.77 1185.07H1591.89V1319.6H1590.77ZM1591.89 1185.07H1593.01V1319.6H1591.89ZM1593.01 1151.43H1594.13V1319.6H1593.01ZM1594.13 1162.64H1595.25V1319.6H1594.13ZM1595.25 1173.86H1596.37V1319.6H1595.25ZM1596.37 1173.86H1597.50V1319.6H1596.37ZM1597.50 1151.43H1598.62V1319.6H1597.50ZM1598.62 1106.59H1599.74V1319.6H1598.62ZM1599.74 1050.53H1600.86V1319.6H1599.74ZM1600.86 1061.74H1601.98V1319.6H1600.86ZM1601.98 1061.74H1603.10V1319.6H1601.98ZM1603.10 1106.59H1604.22V1319.6H1603.10ZM1604.22 1218.70H1605.35V1319.6H1604.22ZM1605.35 1218.70H1606.47V1319.6H1605.35ZM1606.47 1218.70H1607.59V1319.6H1606.47ZM1607.59 1218.70H1608.71V1319.6H1607.59ZM1608.71 1218.70H1609.83V1319.6H1608.71ZM1609.83 1229.91H1610.95V1319.6H1609.83ZM1610.95 1229.91H1612.07V1319.6H1610.95ZM1612.07 1285.97H1613.20V1319.6H1612.07ZM1613.20 1308.39H1614.32V1319.6H1613.20ZM1614.32 1308.39H1615.44V1319.6H1614.32ZM1615.44 1308.39H1616.56V1319.6H1615.44ZM1616.56 1308.39H1617.68V1319.6H1616.56ZM1617.68 1308.39H1618.80V1319.6H1617.68ZM1618.80 1285.97H1619.92V1319.6H1618.80ZM1619.92 1285.97H1621.05V1319.6H1619.92ZM1621.05 1308.39H1622.17V1319.6H1621.05ZM1622.17 1308.39H1623.29V1319.6H1622.17ZM1623.29 1308.39H1624.41V1319.6H1623.29ZM1624.41 1308.39H1625.53V1319.6H1624.41ZM1625.53 1308.39H1626.65V1319.6H1625.53ZM1626.65 1308.39H1627.77V1319.6H1626.65ZM1627.77 1229.91H1628.90V1319.6H1627.77ZM1628.90 1229.91H1630.02V1319.6H1628.90ZM1630.02 949.63H1631.14V1319.6H1630.02ZM1631.14 1084.17H1632.26V1319.6H1631.14ZM1632.26 1084.17H1633.38V1319.6H1632.26ZM1633.38 1151.43H1634.50V1319.6H1633.38ZM1634.50 1162.64H1635.62V1319.6H1634.50ZM1635.62 1162.64H1636.75V1319.6H1635.62ZM1636.75 1129.01H1637.87V1319.6H1636.75ZM1637.87 1129.01H1638.99V1319.6H1637.87ZM1638.99 1095.38H1640.11V1319.6H1638.99ZM1640.11 1072.96H1641.23V1319.6H1640.11ZM1641.23 1072.96H1642.35V1319.6H1641.23ZM1642.35 1129.01H1643.47V1319.6H1642.35ZM1643.47 1308.39H1644.60V1319.6H1643.47ZM1644.60 1308.39H1645.72V1319.6H1644.60ZM1645.72 1308.39H1646.84V1319.6H1645.72ZM1646.84 1207.49H1647.96V1319.6H1646.84ZM1647.96 1207.49H1649.08V1319.6H1647.96ZM1649.08 1185.07H1650.20V1319.6H1649.08ZM1650.20 1185.07H1651.32V1319.6H1650.20ZM1651.32 1185.07H1652.45V1319.6H1651.32ZM1652.45 1185.07H1653.57V1319.6H1652.45ZM1653.57 1185.07H1654.69V1319.6H1653.57ZM1654.69 1129.01H1655.81V1319.6H1654.69ZM1655.81 1129.01H1656.93V1319.6H1655.81ZM1656.93 1106.59H1658.05V1319.6H1656.93ZM1658.05 1061.74H1659.17V1319.6H1658.05ZM1659.17 1061.74H1660.30V1319.6H1659.17ZM1660.30 1095.38H1661.42V1319.6H1660.30ZM1661.42 1095.38H1662.54V1319.6H1661.42ZM1662.54 1285.97H1663.66V1319.6H1662.54ZM1663.66 1274.76H1664.78V1319.6H1663.66ZM1664.78 1274.76H1665.90V1319.6H1664.78ZM1665.90 1308.39H1667.02V1319.6H1665.90ZM1667.02 1308.39H1668.15V1319.6H1667.02ZM1668.15 1308.39H1669.27V1319.6H1668.15ZM1669.27 1308.39H1670.39V1319.6H1669.27ZM1670.39 1308.39H1671.51V1319.6H1670.39ZM1671.51 1308.39H1672.63V1319.6H1671.51ZM1672.63 1308.39H1673.75V1319.6H1672.63ZM1673.75 1308.39H1674.87V1319.6H1673.75ZM1674.87 1308.39H1676.00V1319.6H1674.87ZM1850.94 1297.18H1852.06V1319.6H1850.94ZM1852.06 1297.18H1853.18V1319.6H1852.06ZM1853.18 1297.18H1854.30V1319.6H1853.18ZM1854.30 1297.18H1855.42V1319.6H1854.30ZM1855.42 1297.18H1856.55V1319.6H1855.42ZM1856.55 1308.39H1857.67V1319.6H1856.55ZM1857.67 1308.39H1858.79V1319.6H1857.67ZM1858.79 1308.39H1859.91V1319.6H1858.79ZM1859.91 1297.18H1861.03V1319.6H1859.91ZM1861.03 1297.18H1862.15V1319.6H1861.03ZM1862.15 1308.39H1863.27V1319.6H1862.15ZM1863.27 1297.18H1864.40V1319.6H1863.27ZM1864.40 1308.39H1865.52V1319.6H1864.40ZM1865.52 1297.18H1866.64V1319.6H1865.52ZM1866.64 1297.18H1867.76V1319.6H1866.64ZM1867.76 1297.18H1868.88V1319.6H1867.76ZM1868.88 1297.18H1870.00V1319.6H1868.88ZM1870.00 1308.39H1871.12V1319.6H1870.00ZM1871.12 1151.43H1872.25V1319.6H1871.12ZM1872.25 1151.43H1873.37V1319.6H1872.25ZM1873.37 1005.69H1874.49V1319.6H1873.37ZM1874.49 1005.69H1875.61V1319.6H1874.49ZM1875.61 882.37H1876.73V1319.6H1875.61ZM1876.73 893.58H1877.85V1319.6H1876.73ZM1877.85 893.58H1878.97V1319.6H1877.85ZM1878.97 1050.53H1880.10V1319.6H1878.97ZM1880.10 1117.80H1881.22V1319.6H1880.10ZM1881.22 1117.80H1882.34V1319.6H1881.22ZM1882.34 1117.80H1883.46V1319.6H1882.34ZM1883.46 1196.28H1884.58V1319.6H1883.46ZM1884.58 1196.28H1885.70V1319.6H1884.58ZM1885.70 1129.01H1886.82V1319.6H1885.70ZM1886.82 1185.07H1887.95V1319.6H1886.82ZM1887.95 1185.07H1889.07V1319.6H1887.95ZM1889.07 1185.07H1890.19V1319.6H1889.07ZM1890.19 1162.64H1891.31V1319.6H1890.19ZM1891.31 1162.64H1892.43V1319.6H1891.31ZM1892.43 1185.07H1893.55V1319.6H1892.43ZM1893.55 1185.07H1894.67V1319.6H1893.55ZM1894.67 1185.07H1895.80V1319.6H1894.67ZM1895.80 1095.38H1896.92V1319.6H1895.80ZM1896.92 949.63H1898.04V1319.6H1896.92ZM1898.04 949.63H1899.16V1319.6H1898.04ZM1899.16 859.94H1900.28V1319.6H1899.16ZM1900.28 904.79H1901.40V1319.6H1900.28ZM1901.40 904.79H1902.52V1319.6H1901.40ZM1902.52 1039.32H1903.65V1319.6H1902.52ZM1903.65 1072.96H1904.77V1319.6H1903.65ZM1904.77 1072.96H1905.89V1319.6H1904.77ZM1905.89 1072.96H1907.01V1319.6H1905.89ZM1907.01 1061.74H1908.13V1319.6H1907.01ZM1908.13 1061.74H1909.25V1319.6H1908.13ZM1909.25 1151.43H1910.37V1319.6H1909.25ZM1910.37 1151.43H1911.50V1319.6H1910.37ZM1911.50 983.27H1912.62V1319.6H1911.50ZM1912.62 983.27H1913.74V1319.6H1912.62ZM1913.74 1173.86H1914.86V1319.6H1913.74ZM1914.86 1173.86H1915.98V1319.6H1914.86ZM1915.98 1173.86H1917.10V1319.6H1915.98ZM1917.10 1140.22H1918.22V1319.6H1917.10ZM1918.22 1140.22H1919.35V1319.6H1918.22ZM1919.35 1050.53H1920.47V1319.6H1919.35ZM1920.47 1050.53H1921.59V1319.6H1920.47ZM1921.59 1061.74H1922.71V1319.6H1921.59ZM1922.71 1061.74H1923.83V1319.6H1922.71ZM1923.83 1061.74H1924.95V1319.6H1923.83ZM1924.95 1061.74H1926.07V1319.6H1924.95ZM1926.07 1061.74H1927.20V1319.6H1926.07ZM1927.20 1061.74H1928.32V1319.6H1927.20ZM1928.32 1285.97H1929.44V1319.6H1928.32ZM1929.44 1285.97H1930.56V1319.6H1929.44ZM1930.56 1297.18H1931.68V1319.6H1930.56ZM1931.68 1297.18H1932.80V1319.6H1931.68ZM1932.80 1308.39H1933.92V1319.6H1932.80ZM1933.92 1308.39H1935.05V1319.6H1933.92ZM1935.05 1274.76H1936.17V1319.6H1935.05ZM1936.17 1274.76H1937.29V1319.6H1936.17ZM1937.29 1308.39H1938.41V1319.6H1937.29ZM1938.41 1308.39H1939.53V1319.6H1938.41ZM1939.53 1308.39H1940.65V1319.6H1939.53ZM1940.65 1308.39H1941.77V1319.6H1940.65ZM1941.77 1308.39H1942.90V1319.6H1941.77ZM1942.90 1308.39H1944.02V1319.6H1942.90ZM1944.02 1308.39H1945.14V1319.6H1944.02ZM1945.14 1308.39H1946.26V1319.6H1945.14ZM1946.26 1308.39H1947.38V1319.6H1946.26ZM1947.38 1308.39H1948.50V1319.6H1947.38ZM1948.50 1308.39H1949.62V1319.6H1948.50ZM1949.62 1274.76H1950.75V1319.6H1949.62ZM1950.75 1274.76H1951.87V1319.6H1950.75ZM1951.87 1095.38H1952.99V1319.6H1951.87ZM1952.99 1218.70H1954.11V1319.6H1952.99ZM1954.11 1218.70H1955.23V1319.6H1954.11ZM1955.23 1218.70H1956.35V1319.6H1955.23ZM1956.35 1140.22H1957.47V1319.6H1956.35ZM1957.47 1140.22H1958.60V1319.6H1957.47ZM1958.60 1185.07H1959.72V1319.6H1958.60ZM1959.72 1185.07H1960.84V1319.6H1959.72ZM1960.84 1185.07H1961.96V1319.6H1960.84ZM1961.96 1196.28H1963.08V1319.6H1961.96ZM1963.08 1196.28H1964.20V1319.6H1963.08ZM1964.20 1151.43H1965.32V1319.6H1964.20ZM1965.32 1151.43H1966.45V1319.6H1965.32ZM1966.45 1084.17H1967.57V1319.6H1966.45ZM1967.57 1084.17H1968.69V1319.6H1967.57ZM1968.69 1095.38H1969.81V1319.6H1968.69ZM1969.81 1297.18H1970.93V1319.6H1969.81ZM1970.93 1297.18H1972.05V1319.6H1970.93ZM1972.05 1297.18H1973.17V1319.6H1972.05ZM1973.17 1297.18H1974.30V1319.6H1973.17ZM1974.30 1297.18H1975.42V1319.6H1974.30ZM1975.42 1285.97H1976.54V1319.6H1975.42ZM1976.54 1285.97H1977.66V1319.6H1976.54ZM1977.66 1285.97H1978.78V1319.6H1977.66ZM1978.78 1285.97H1979.90V1319.6H1978.78ZM1979.90 1285.97H1981.02V1319.6H1979.90ZM1981.02 1285.97H1982.15V1319.6H1981.02ZM1982.15 1263.54H1983.27V1319.6H1982.15ZM1983.27 1285.97H1984.39V1319.6H1983.27ZM1984.39 1285.97H1985.51V1319.6H1984.39ZM1985.51 1308.39H1986.63V1319.6H1985.51ZM1986.63 1308.39H1987.75V1319.6H1986.63ZM1987.75 1308.39H1988.87V1319.6H1987.75ZM1988.87 1308.39H1990.00V1319.6H1988.87ZM1990.00 1297.18H1991.12V1319.6H1990.00ZM1991.12 1297.18H1992.24V1319.6H1991.12ZM1992.24 1297.18H1993.36V1319.6H1992.24ZM1993.36 1285.97H1994.48V1319.6H1993.36ZM1994.48 1285.97H1995.60V1319.6H1994.48ZM1995.60 1285.97H1996.72V1319.6H1995.60ZM1996.72 1285.97H1997.85V1319.6H1996.72ZM1997.85 1285.97H1998.97V1319.6H1997.85ZM2173.91 1308.39H2175.03V1319.6H2173.91ZM2175.03 1308.39H2176.15V1319.6H2175.03ZM2176.15 1308.39H2177.27V1319.6H2176.15ZM2177.27 1308.39H2178.40V1319.6H2177.27ZM2178.40 1297.18H2179.52V1319.6H2178.40ZM2179.52 1308.39H2180.64V1319.6H2179.52ZM2180.64 1297.18H2181.76V1319.6H2180.64ZM2181.76 1308.39H2182.88V1319.6H2181.76ZM2182.88 1308.39H2184.00V1319.6H2182.88ZM2184.00 1308.39H2185.12V1319.6H2184.00ZM2185.12 1297.18H2186.25V1319.6H2185.12ZM2186.25 1140.22H2187.37V1319.6H2186.25ZM2187.37 871.16H2188.49V1319.6H2187.37ZM2188.49 848.73H2189.61V1319.6H2188.49ZM2189.61 871.16H2190.73V1319.6H2189.61ZM2190.73 904.79H2191.85V1319.6H2190.73ZM2191.85 1095.38H2192.97V1319.6H2191.85ZM2192.97 1129.01H2194.10V1319.6H2192.97ZM2194.10 1196.28H2195.22V1319.6H2194.10ZM2195.22 1185.07H2196.34V1319.6H2195.22ZM2196.34 1151.43H2197.46V1319.6H2196.34ZM2197.46 882.37H2198.58V1319.6H2197.46ZM2198.58 859.94H2199.70V1319.6H2198.58ZM2199.70 871.16H2200.82V1319.6H2199.70ZM2200.82 859.94H2201.95V1319.6H2200.82ZM2201.95 826.31H2203.07V1319.6H2201.95ZM2203.07 1072.96H2204.19V1319.6H2203.07ZM2204.19 1218.70H2205.31V1319.6H2204.19ZM2205.31 1218.70H2206.43V1319.6H2205.31ZM2206.43 1241.12H2207.55V1319.6H2206.43ZM2207.55 1196.28H2208.67V1319.6H2207.55ZM2208.67 1162.64H2209.80V1319.6H2208.67ZM2209.80 1095.38H2210.92V1319.6H2209.80ZM2210.92 1151.43H2212.04V1319.6H2210.92ZM2212.04 1129.01H2213.16V1319.6H2212.04ZM2213.16 1050.53H2214.28V1319.6H2213.16ZM2214.28 1061.74H2215.40V1319.6H2214.28ZM2215.40 904.79H2216.52V1319.6H2215.40ZM2216.52 893.58H2217.65V1319.6H2216.52ZM2217.65 927.21H2218.77V1319.6H2217.65ZM2218.77 904.79H2219.89V1319.6H2218.77ZM2219.89 960.84H2221.01V1319.6H2219.89ZM2221.01 1072.96H2222.13V1319.6H2221.01ZM2222.13 1061.74H2223.25V1319.6H2222.13ZM2223.25 1117.80H2224.37V1319.6H2223.25ZM2224.37 1072.96H2225.50V1319.6H2224.37ZM2225.50 893.58H2226.62V1319.6H2225.50ZM2226.62 1016.90H2227.74V1319.6H2226.62ZM2227.74 848.73H2228.86V1319.6H2227.74ZM2228.86 882.37H2229.98V1319.6H2228.86ZM2229.98 1028.11H2231.10V1319.6H2229.98ZM2231.10 1162.64H2232.22V1319.6H2231.10ZM2232.22 1140.22H2233.35V1319.6H2232.22ZM2233.35 1129.01H2234.47V1319.6H2233.35ZM2234.47 1084.17H2235.59V1319.6H2234.47ZM2235.59 1229.91H2236.71V1319.6H2235.59ZM2236.71 1263.54H2237.83V1319.6H2236.71ZM2237.83 1151.43H2238.95V1319.6H2237.83ZM2238.95 983.27H2240.07V1319.6H2238.95ZM2240.07 859.94H2241.20V1319.6H2240.07ZM2241.20 1084.17H2242.32V1319.6H2241.20ZM2242.32 1061.74H2243.44V1319.6H2242.32ZM2243.44 1106.59H2244.56V1319.6H2243.44ZM2244.56 1061.74H2245.68V1319.6H2244.56ZM2245.68 1061.74H2246.80V1319.6H2245.68ZM2246.80 1005.69H2247.92V1319.6H2246.80ZM2247.92 1072.96H2249.05V1319.6H2247.92ZM2249.05 1028.11H2250.17V1319.6H2249.05ZM2250.17 871.16H2251.29V1319.6H2250.17ZM2251.29 882.37H2252.41V1319.6H2251.29ZM2252.41 927.21H2253.53V1319.6H2252.41ZM2253.53 1162.64H2254.65V1319.6H2253.53ZM2254.65 1185.07H2255.77V1319.6H2254.65ZM2255.77 1162.64H2256.90V1319.6H2255.77ZM2256.90 1106.59H2258.02V1319.6H2256.90ZM2258.02 1162.64H2259.14V1319.6H2258.02ZM2259.14 1140.22H2260.26V1319.6H2259.14ZM2260.26 1005.69H2261.38V1319.6H2260.26ZM2261.38 893.58H2262.50V1319.6H2261.38ZM2262.50 904.79H2263.62V1319.6H2262.50ZM2263.62 904.79H2264.75V1319.6H2263.62ZM2264.75 1050.53H2265.87V1319.6H2264.75ZM2265.87 1162.64H2266.99V1319.6H2265.87ZM2266.99 1218.70H2268.11V1319.6H2266.99ZM2268.11 1196.28H2269.23V1319.6H2268.11ZM2269.23 1207.49H2270.35V1319.6H2269.23ZM2270.35 1196.28H2271.47V1319.6H2270.35ZM2271.47 1196.28H2272.60V1319.6H2271.47ZM2272.60 1196.28H2273.72V1319.6H2272.60ZM2273.72 1196.28H2274.84V1319.6H2273.72ZM2274.84 1185.07H2275.96V1319.6H2274.84ZM2275.96 1173.86H2277.08V1319.6H2275.96ZM2277.08 1207.49H2278.20V1319.6H2277.08ZM2278.20 1196.28H2279.32V1319.6H2278.20ZM2279.32 1207.49H2280.45V1319.6H2279.32ZM2280.45 1039.32H2281.57V1319.6H2280.45ZM2281.57 1072.96H2282.69V1319.6H2281.57ZM2282.69 871.16H2283.81V1319.6H2282.69ZM2283.81 871.16H2284.93V1319.6H2283.81ZM2284.93 882.37H2286.05V1319.6H2284.93ZM2286.05 1028.11H2287.17V1319.6H2286.05ZM2287.17 1039.32H2288.30V1319.6H2287.17ZM2288.30 1084.17H2289.42V1319.6H2288.30ZM2289.42 1039.32H2290.54V1319.6H2289.42ZM2290.54 1095.38H2291.66V1319.6H2290.54ZM2291.66 1207.49H2292.78V1319.6H2291.66ZM2292.78 1218.70H2293.90V1319.6H2292.78ZM2293.90 1229.91H2295.02V1319.6H2293.90ZM2295.02 1229.91H2296.15V1319.6H2295.02ZM2296.15 1229.91H2297.27V1319.6H2296.15ZM2297.27 1229.91H2298.39V1319.6H2297.27ZM2298.39 1241.12H2299.51V1319.6H2298.39ZM2299.51 1039.32H2300.63V1319.6H2299.51ZM2300.63 859.94H2301.75V1319.6H2300.63ZM2301.75 882.37H2302.87V1319.6H2301.75ZM2302.87 904.79H2304.00V1319.6H2302.87ZM2304.00 1084.17H2305.12V1319.6H2304.00ZM2305.12 1117.80H2306.24V1319.6H2305.12ZM2306.24 1072.96H2307.36V1319.6H2306.24ZM2307.36 1106.59H2308.48V1319.6H2307.36ZM2308.48 1061.74H2309.60V1319.6H2308.48ZM2309.60 1084.17H2310.72V1319.6H2309.60ZM2310.72 1252.33H2311.85V1319.6H2310.72ZM2311.85 1241.12H2312.97V1319.6H2311.85ZM2314.09 1308.39H2315.21V1319.6H2314.09ZM2316.33 1308.39H2317.45V1319.6H2316.33ZM2317.45 1308.39H2318.57V1319.6H2317.45ZM2318.57 1297.18H2319.70V1319.6H2318.57ZM2319.70 1285.97H2320.82V1319.6H2319.70ZM2320.82 1297.18H2321.94V1319.6H2320.82Z" fill="#23906f"/>
<path d="M155.90 1308.39H156.46V1319.6H155.90ZM156.46 1308.39H157.58V1319.6H156.46ZM157.58 1308.39H158.70V1319.6H157.58ZM158.70 1308.39H159.83V1319.6H158.70ZM159.83 1308.39H160.95V1319.6H159.83ZM160.95 1308.39H162.07V1319.6H160.95ZM162.07 1308.39H163.19V1319.6H162.07ZM163.19 1308.39H164.31V1319.6H163.19ZM164.31 1308.39H165.43V1319.6H164.31ZM165.43 1308.39H166.55V1319.6H165.43ZM166.55 1308.39H167.68V1319.6H166.55ZM167.68 1308.39H168.80V1319.6H167.68ZM168.80 1308.39H169.92V1319.6H168.80ZM169.92 1297.18H171.04V1319.6H169.92ZM171.04 1297.18H172.16V1319.6H171.04ZM172.16 1308.39H173.28V1319.6H172.16ZM173.28 1308.39H174.40V1319.6H173.28ZM174.40 1308.39H175.53V1319.6H174.40ZM175.53 1308.39H176.65V1319.6H175.53ZM176.65 1308.39H177.77V1319.6H176.65ZM177.77 1308.39H178.89V1319.6H177.77ZM178.89 1308.39H180.01V1319.6H178.89ZM180.01 1308.39H181.13V1319.6H180.01ZM181.13 1308.39H182.25V1319.6H181.13ZM182.25 1308.39H183.38V1319.6H182.25ZM183.38 1308.39H184.50V1319.6H183.38ZM184.50 1297.18H185.62V1319.6H184.50ZM185.62 1297.18H186.74V1319.6H185.62ZM186.74 1308.39H187.86V1319.6H186.74ZM187.86 1308.39H188.98V1319.6H187.86ZM188.98 1308.39H190.10V1319.6H188.98ZM190.10 1308.39H191.22V1319.6H190.10ZM191.22 1308.39H192.35V1319.6H191.22ZM192.35 1308.39H193.47V1319.6H192.35ZM193.47 1308.39H194.59V1319.6H193.47ZM194.59 1308.39H195.71V1319.6H194.59ZM195.71 1308.39H196.83V1319.6H195.71ZM196.83 1308.39H197.95V1319.6H196.83ZM197.95 1308.39H199.07V1319.6H197.95ZM199.08 1308.39H200.20V1319.6H199.08ZM200.20 1308.39H201.32V1319.6H200.20ZM201.32 1308.39H202.44V1319.6H201.32ZM202.44 1308.39H203.56V1319.6H202.44ZM203.56 1308.39H204.68V1319.6H203.56ZM204.68 1308.39H205.80V1319.6H204.68ZM205.80 1308.39H206.92V1319.6H205.80ZM206.92 1308.39H208.05V1319.6H206.92ZM208.05 1308.39H209.17V1319.6H208.05ZM209.17 1308.39H210.29V1319.6H209.17ZM210.29 1308.39H211.41V1319.6H210.29ZM211.41 1308.39H212.53V1319.6H211.41ZM212.53 1308.39H213.65V1319.6H212.53ZM213.65 1308.39H214.78V1319.6H213.65ZM214.78 1308.39H215.90V1319.6H214.78ZM215.90 1308.39H217.02V1319.6H215.90ZM217.02 1308.39H218.14V1319.6H217.02ZM218.14 1308.39H219.26V1319.6H218.14ZM219.26 1297.18H220.38V1319.6H219.26ZM220.38 1297.18H221.50V1319.6H220.38ZM221.50 1297.18H222.62V1319.6H221.50ZM222.62 1297.18H223.75V1319.6H222.62ZM223.75 1297.18H224.87V1319.6H223.75ZM224.87 1308.39H225.99V1319.6H224.87ZM225.99 1308.39H227.11V1319.6H225.99ZM227.11 1308.39H228.23V1319.6H227.11ZM228.23 1308.39H229.35V1319.6H228.23ZM229.35 1308.39H230.47V1319.6H229.35ZM230.47 1308.39H231.60V1319.6H230.47ZM231.60 1308.39H232.72V1319.6H231.60ZM232.72 1308.39H233.84V1319.6H232.72ZM233.84 1308.39H234.96V1319.6H233.84ZM234.96 1308.39H236.08V1319.6H234.96ZM384.11 1308.39H385.23V1319.6H384.11ZM385.23 1297.18H386.35V1319.6H385.23ZM386.35 1297.18H387.47V1319.6H386.35ZM387.47 1308.39H388.60V1319.6H387.47ZM388.60 1308.39H389.72V1319.6H388.60ZM389.72 1308.39H390.84V1319.6H389.72ZM390.84 1308.39H391.96V1319.6H390.84ZM391.96 1308.39H393.08V1319.6H391.96ZM393.08 1308.39H394.20V1319.6H393.08ZM394.20 1308.39H395.32V1319.6H394.20ZM395.32 1308.39H396.45V1319.6H395.32ZM396.45 1308.39H397.57V1319.6H396.45ZM397.57 1308.39H398.69V1319.6H397.57ZM398.69 1308.39H399.81V1319.6H398.69ZM399.81 1308.39H400.93V1319.6H399.81ZM400.93 1308.39H402.05V1319.6H400.93ZM402.05 1308.39H403.17V1319.6H402.05ZM403.17 1308.39H404.30V1319.6H403.17ZM404.30 1308.39H405.42V1319.6H404.30ZM405.42 1308.39H406.54V1319.6H405.42ZM406.54 1308.39H407.66V1319.6H406.54ZM407.66 1308.39H408.78V1319.6H407.66ZM408.78 1308.39H409.90V1319.6H408.78ZM409.90 1308.39H411.02V1319.6H409.90ZM411.02 1308.39H412.15V1319.6H411.02ZM412.15 1308.39H413.27V1319.6H412.15ZM413.27 1308.39H414.39V1319.6H413.27ZM414.39 1308.39H415.51V1319.6H414.39ZM415.51 1308.39H416.63V1319.6H415.51ZM416.63 1308.39H417.75V1319.6H416.63ZM417.75 1308.39H418.87V1319.6H417.75ZM418.87 1308.39H420.00V1319.6H418.87ZM420.00 1297.18H421.12V1319.6H420.00ZM421.12 1308.39H422.24V1319.6H421.12ZM422.24 1308.39H423.36V1319.6H422.24ZM423.36 1308.39H424.48V1319.6H423.36ZM424.48 1308.39H425.60V1319.6H424.48ZM425.60 1308.39H426.72V1319.6H425.60ZM426.72 1308.39H427.85V1319.6H426.72ZM427.85 1308.39H428.97V1319.6H427.85ZM428.97 1308.39H430.09V1319.6H428.97ZM430.09 1308.39H431.21V1319.6H430.09ZM431.21 1308.39H432.33V1319.6H431.21ZM432.33 1308.39H433.45V1319.6H432.33ZM433.45 1308.39H434.57V1319.6H433.45ZM434.57 1308.39H435.70V1319.6H434.57ZM435.70 1308.39H436.82V1319.6H435.70ZM436.82 1308.39H437.94V1319.6H436.82ZM437.94 1308.39H439.06V1319.6H437.94ZM439.06 1308.39H440.18V1319.6H439.06ZM440.18 1308.39H441.30V1319.6H440.18ZM441.30 1308.39H442.42V1319.6H441.30ZM442.42 1308.39H443.55V1319.6H442.42ZM443.55 1308.39H444.67V1319.6H443.55ZM444.67 1308.39H445.79V1319.6H444.67ZM445.79 1308.39H446.91V1319.6H445.79ZM446.91 1308.39H448.03V1319.6H446.91ZM448.03 1308.39H449.15V1319.6H448.03ZM449.15 1308.39H450.27V1319.6H449.15ZM450.27 1308.39H451.40V1319.6H450.27ZM451.40 1308.39H452.52V1319.6H451.40ZM452.52 1308.39H453.64V1319.6H452.52ZM453.64 1308.39H454.76V1319.6H453.64ZM454.76 1308.39H455.88V1319.6H454.76ZM455.88 1308.39H457.00V1319.6H455.88ZM457.00 1308.39H458.12V1319.6H457.00ZM458.12 1308.39H459.25V1319.6H458.12ZM459.25 1308.39H460.37V1319.6H459.25ZM460.37 1308.39H461.49V1319.6H460.37ZM461.49 1308.39H462.61V1319.6H461.49ZM462.61 1308.39H463.73V1319.6H462.61ZM463.73 1308.39H464.85V1319.6H463.73ZM464.85 1308.39H465.97V1319.6H464.85ZM465.97 1308.39H467.10V1319.6H465.97ZM467.10 1308.39H468.22V1319.6H467.10ZM468.22 1308.39H469.34V1319.6H468.22ZM469.34 1308.39H470.46V1319.6H469.34ZM470.46 1308.39H471.58V1319.6H470.46ZM471.58 1308.39H472.70V1319.6H471.58ZM472.70 1308.39H473.82V1319.6H472.70ZM473.82 1285.97H474.95V1319.6H473.82ZM474.95 1285.97H476.07V1319.6H474.95ZM476.07 1297.18H477.19V1319.6H476.07ZM477.19 1297.18H478.31V1319.6H477.19ZM478.31 1297.18H479.43V1319.6H478.31ZM479.43 1297.18H480.55V1319.6H479.43ZM480.55 1297.18H481.67V1319.6H480.55ZM481.67 1297.18H482.80V1319.6H481.67ZM482.80 1297.18H483.92V1319.6H482.80ZM483.92 1308.39H485.04V1319.6H483.92ZM485.04 1308.39H486.16V1319.6H485.04ZM486.16 1308.39H487.28V1319.6H486.16ZM487.28 1308.39H488.40V1319.6H487.28ZM488.40 1308.39H489.52V1319.6H488.40ZM489.52 1308.39H490.65V1319.6H489.52ZM490.65 1308.39H491.77V1319.6H490.65ZM491.77 1308.39H492.89V1319.6H491.77ZM492.89 1308.39H494.01V1319.6H492.89ZM494.01 1308.39H495.13V1319.6H494.01ZM495.13 1308.39H496.25V1319.6H495.13ZM496.25 1308.39H497.37V1319.6H496.25ZM497.37 1308.39H498.50V1319.6H497.37ZM498.50 1297.18H499.62V1319.6H498.50ZM499.62 1297.18H500.74V1319.6H499.62ZM500.74 1297.18H501.86V1319.6H500.74ZM501.86 1297.18H502.98V1319.6H501.86ZM502.98 1297.18H504.10V1319.6H502.98ZM504.10 1297.18H505.22V1319.6H504.10ZM505.22 1308.39H506.35V1319.6H505.22ZM506.35 1308.39H507.47V1319.6H506.35ZM507.47 1308.39H508.59V1319.6H507.47ZM508.59 1308.39H509.71V1319.6H508.59ZM509.71 1308.39H510.83V1319.6H509.71ZM510.83 1308.39H511.95V1319.6H510.83ZM511.95 1308.39H513.07V1319.6H511.95ZM513.07 1308.39H514.20V1319.6H513.07ZM514.20 1308.39H515.32V1319.6H514.20ZM515.32 1308.39H516.44V1319.6H515.32ZM516.44 1308.39H517.56V1319.6H516.44ZM517.56 1308.39H518.68V1319.6H517.56ZM518.68 1285.97H519.80V1319.6H518.68ZM519.80 1285.97H520.92V1319.6H519.80ZM520.92 1297.18H522.05V1319.6H520.92ZM522.05 1297.18H523.17V1319.6H522.05ZM523.17 1297.18H524.29V1319.6H523.17ZM524.29 1297.18H525.41V1319.6H524.29ZM525.41 1297.18H526.53V1319.6H525.41ZM526.53 1297.18H527.65V1319.6H526.53ZM527.65 1308.39H528.77V1319.6H527.65ZM528.77 1308.39H529.90V1319.6H528.77ZM529.90 1308.39H531.02V1319.6H529.90ZM531.02 1308.39H532.14V1319.6H531.02ZM532.14 1308.39H533.26V1319.6H532.14ZM533.26 1308.39H534.38V1319.6H533.26ZM534.38 1308.39H535.50V1319.6H534.38ZM535.50 1308.39H536.62V1319.6H535.50ZM536.62 1308.39H537.75V1319.6H536.62ZM537.75 1308.39H538.87V1319.6H537.75ZM538.87 1308.39H539.99V1319.6H538.87ZM539.99 1308.39H541.11V1319.6H539.99ZM541.11 1297.18H542.23V1319.6H541.11ZM542.23 1297.18H543.35V1319.6H542.23ZM543.35 1297.18H544.47V1319.6H543.35ZM544.47 1297.18H545.60V1319.6H544.47ZM545.60 1297.18H546.72V1319.6H545.60ZM546.72 1297.18H547.84V1319.6H546.72ZM547.84 1297.18H548.96V1319.6H547.84ZM548.96 1297.18H550.08V1319.6H548.96ZM550.08 1308.39H551.20V1319.6H550.08ZM551.20 1308.39H552.32V1319.6H551.20ZM552.32 1308.39H553.45V1319.6H552.32ZM553.45 1308.39H554.57V1319.6H553.45ZM554.57 1308.39H555.69V1319.6H554.57ZM555.69 1308.39H556.81V1319.6H555.69ZM556.81 1308.39H557.93V1319.6H556.81ZM557.93 1308.39H559.05V1319.6H557.93ZM559.05 1308.39H560.17V1319.6H559.05ZM560.17 1308.39H561.30V1319.6H560.17ZM561.30 1308.39H562.42V1319.6H561.30ZM562.42 1308.39H563.54V1319.6H562.42ZM563.54 1308.39H564.66V1319.6H563.54ZM564.66 1297.18H565.78V1319.6H564.66ZM565.78 1297.18H566.90V1319.6H565.78ZM566.90 1297.18H568.02V1319.6H566.90ZM568.02 1297.18H569.15V1319.6H568.02ZM569.15 1297.18H570.27V1319.6H569.15ZM570.27 1297.18H571.39V1319.6H570.27ZM571.39 1297.18H572.51V1319.6H571.39ZM572.51 1297.18H573.63V1319.6H572.51ZM573.63 1308.39H574.75V1319.6H573.63ZM574.75 1308.39H575.88V1319.6H574.75ZM575.87 1308.39H577.00V1319.6H575.87ZM577.00 1308.39H578.12V1319.6H577.00ZM578.12 1308.39H579.24V1319.6H578.12ZM579.24 1308.39H580.36V1319.6H579.24ZM580.36 1308.39H581.48V1319.6H580.36ZM581.48 1308.39H582.60V1319.6H581.48ZM582.60 1308.39H583.72V1319.6H582.60ZM583.72 1308.39H584.85V1319.6H583.72ZM584.85 1297.18H585.97V1319.6H584.85ZM585.97 1297.18H587.09V1319.6H585.97ZM587.09 1297.18H588.21V1319.6H587.09ZM588.21 1297.18H589.33V1319.6H588.21ZM589.33 1297.18H590.45V1319.6H589.33ZM590.45 1297.18H591.57V1319.6H590.45ZM591.57 1297.18H592.70V1319.6H591.57ZM592.70 1297.18H593.82V1319.6H592.70ZM593.82 1285.97H594.94V1319.6H593.82ZM594.94 1285.97H596.06V1319.6H594.94ZM596.06 1297.18H597.18V1319.6H596.06ZM597.18 1308.39H598.30V1319.6H597.18ZM598.30 1308.39H599.42V1319.6H598.30ZM599.42 1308.39H600.55V1319.6H599.42ZM600.55 1308.39H601.67V1319.6H600.55ZM601.67 1308.39H602.79V1319.6H601.67ZM602.79 1308.39H603.91V1319.6H602.79ZM603.91 1308.39H605.03V1319.6H603.91ZM605.03 1308.39H606.15V1319.6H605.03ZM606.15 1308.39H607.27V1319.6H606.15ZM607.27 1308.39H608.40V1319.6H607.27ZM608.40 1308.39H609.52V1319.6H608.40ZM609.52 1308.39H610.64V1319.6H609.52ZM610.64 1308.39H611.76V1319.6H610.64ZM611.76 1308.39H612.88V1319.6H611.76ZM612.88 1308.39H614.00V1319.6H612.88ZM614.00 1308.39H615.12V1319.6H614.00ZM615.12 1308.39H616.25V1319.6H615.12ZM616.25 1308.39H617.37V1319.6H616.25ZM617.37 1308.39H618.49V1319.6H617.37ZM618.49 1308.39H619.61V1319.6H618.49ZM619.61 1308.39H620.73V1319.6H619.61ZM620.73 1297.18H621.85V1319.6H620.73ZM621.85 1297.18H622.97V1319.6H621.85ZM622.97 1297.18H624.10V1319.6H622.97ZM624.10 1297.18H625.22V1319.6H624.10ZM625.22 1297.18H626.34V1319.6H625.22ZM626.34 1308.39H627.46V1319.6H626.34ZM627.46 1308.39H628.58V1319.6H627.46ZM628.58 1308.39H629.70V1319.6H628.58ZM629.70 1308.39H630.82V1319.6H629.70ZM630.82 1308.39H631.95V1319.6H630.82ZM631.95 1308.39H633.07V1319.6H631.95ZM633.07 1308.39H634.19V1319.6H633.07ZM634.19 1308.39H635.31V1319.6H634.19ZM635.31 1308.39H636.43V1319.6H635.31ZM636.43 1308.39H637.55V1319.6H636.43ZM637.55 1308.39H638.67V1319.6H637.55ZM638.67 1308.39H639.80V1319.6H638.67ZM639.80 1308.39H640.92V1319.6H639.80ZM640.92 1308.39H642.04V1319.6H640.92ZM642.04 1308.39H643.16V1319.6H642.04ZM643.16 1308.39H644.28V1319.6H643.16ZM644.28 1308.39H645.40V1319.6H644.28ZM645.40 1308.39H646.52V1319.6H645.40ZM646.52 1297.18H647.65V1319.6H646.52ZM647.65 1308.39H648.77V1319.6H647.65ZM648.77 1308.39H649.89V1319.6H648.77ZM649.89 1308.39H651.01V1319.6H649.89ZM651.01 1308.39H652.13V1319.6H651.01ZM652.13 1308.39H653.25V1319.6H652.13ZM653.25 1308.39H654.37V1319.6H653.25ZM654.37 1308.39H655.50V1319.6H654.37ZM655.50 1308.39H656.62V1319.6H655.50ZM656.62 1308.39H657.74V1319.6H656.62ZM657.74 1308.39H658.86V1319.6H657.74ZM658.86 1308.39H659.98V1319.6H658.86ZM659.98 1308.39H661.10V1319.6H659.98ZM661.10 1308.39H662.22V1319.6H661.10ZM662.22 1308.39H663.35V1319.6H662.22ZM663.35 1308.39H664.47V1319.6H663.35ZM664.47 1308.39H665.59V1319.6H664.47ZM665.59 1308.39H666.71V1319.6H665.59ZM666.71 1308.39H667.83V1319.6H666.71ZM667.83 1308.39H668.95V1319.6H667.83ZM668.95 1308.39H670.07V1319.6H668.95ZM670.07 1308.39H671.20V1319.6H670.07ZM671.20 1308.39H672.32V1319.6H671.20ZM672.32 1308.39H673.44V1319.6H672.32ZM673.44 1308.39H674.56V1319.6H673.44ZM674.56 1308.39H675.68V1319.6H674.56ZM675.68 1308.39H676.80V1319.6H675.68ZM676.80 1308.39H677.92V1319.6H676.80ZM677.92 1308.39H679.05V1319.6H677.92ZM679.05 1308.39H680.17V1319.6H679.05ZM680.17 1308.39H681.29V1319.6H680.17ZM681.29 1308.39H682.41V1319.6H681.29ZM682.41 1308.39H683.53V1319.6H682.41ZM683.53 1308.39H684.65V1319.6H683.53ZM684.65 1308.39H685.77V1319.6H684.65ZM685.77 1308.39H686.90V1319.6H685.77ZM686.90 1308.39H688.02V1319.6H686.90ZM688.02 1308.39H689.14V1319.6H688.02ZM689.14 1308.39H690.26V1319.6H689.14ZM690.26 1308.39H691.38V1319.6H690.26ZM691.38 1308.39H692.50V1319.6H691.38ZM692.50 1308.39H693.62V1319.6H692.50ZM693.62 1308.39H694.75V1319.6H693.62ZM694.75 1308.39H695.87V1319.6H694.75ZM695.87 1308.39H696.99V1319.6H695.87ZM696.99 1308.39H698.11V1319.6H696.99ZM698.11 1308.39H699.23V1319.6H698.11ZM699.23 1308.39H700.35V1319.6H699.23ZM700.35 1308.39H701.47V1319.6H700.35ZM701.47 1297.18H702.60V1319.6H701.47ZM702.60 1297.18H703.72V1319.6H702.60ZM703.72 1308.39H704.84V1319.6H703.72ZM704.84 1308.39H705.96V1319.6H704.84ZM705.96 1308.39H707.08V1319.6H705.96ZM707.08 1308.39H708.20V1319.6H707.08ZM708.20 1308.39H709.32V1319.6H708.20ZM709.32 1308.39H710.45V1319.6H709.32ZM710.45 1308.39H711.57V1319.6H710.45ZM711.57 1308.39H712.69V1319.6H711.57ZM712.69 1308.39H713.81V1319.6H712.69ZM713.81 1308.39H714.93V1319.6H713.81ZM714.93 1308.39H716.05V1319.6H714.93ZM716.05 1308.39H717.17V1319.6H716.05ZM717.17 1308.39H718.30V1319.6H717.17ZM718.30 1308.39H719.42V1319.6H718.30ZM719.42 1308.39H720.54V1319.6H719.42ZM720.54 1308.39H721.66V1319.6H720.54ZM721.66 1308.39H722.78V1319.6H721.66ZM722.78 1308.39H723.90V1319.6H722.78ZM723.90 1308.39H725.02V1319.6H723.90ZM725.02 1308.39H726.15V1319.6H725.02ZM726.15 1308.39H727.27V1319.6H726.15ZM727.27 1308.39H728.39V1319.6H727.27ZM728.39 1308.39H729.51V1319.6H728.39ZM729.51 1308.39H730.63V1319.6H729.51ZM730.63 1308.39H731.75V1319.6H730.63ZM731.75 1308.39H732.87V1319.6H731.75ZM732.87 1308.39H734.00V1319.6H732.87ZM734.00 1308.39H735.12V1319.6H734.00ZM735.12 1308.39H736.24V1319.6H735.12ZM736.24 1308.39H737.36V1319.6H736.24ZM737.36 1308.39H738.48V1319.6H737.36ZM738.48 1308.39H739.60V1319.6H738.48ZM739.60 1308.39H740.72V1319.6H739.60ZM740.72 1297.18H741.85V1319.6H740.72ZM741.85 1297.18H742.97V1319.6H741.85ZM742.97 1297.18H744.09V1319.6H742.97ZM744.09 1297.18H745.21V1319.6H744.09ZM745.21 1297.18H746.33V1319.6H745.21ZM746.33 1297.18H747.45V1319.6H746.33ZM747.45 1297.18H748.57V1319.6H747.45ZM748.57 1308.39H749.70V1319.6H748.57ZM749.70 1308.39H750.82V1319.6H749.70ZM750.82 1308.39H751.94V1319.6H750.82ZM751.94 1297.18H753.06V1319.6H751.94ZM753.06 1297.18H754.18V1319.6H753.06ZM754.18 1308.39H755.30V1319.6H754.18ZM755.30 1308.39H756.42V1319.6H755.30ZM756.42 1308.39H757.55V1319.6H756.42ZM757.55 1308.39H758.67V1319.6H757.55ZM758.67 1308.39H759.79V1319.6H758.67ZM759.79 1308.39H760.91V1319.6H759.79ZM760.91 1297.18H762.03V1319.6H760.91ZM762.03 1297.18H763.15V1319.6H762.03ZM763.15 1297.18H764.27V1319.6H763.15ZM764.27 1297.18H765.40V1319.6H764.27ZM765.40 1297.18H766.52V1319.6H765.40ZM766.52 1297.18H767.64V1319.6H766.52ZM767.64 1297.18H768.76V1319.6H767.64ZM768.76 1297.18H769.88V1319.6H768.76ZM769.88 1297.18H771.00V1319.6H769.88ZM771.00 1308.39H772.12V1319.6H771.00ZM772.12 1308.39H773.25V1319.6H772.12ZM773.25 1297.18H774.37V1319.6H773.25ZM774.37 1308.39H775.49V1319.6H774.37ZM775.49 1308.39H776.61V1319.6H775.49ZM776.61 1308.39H777.73V1319.6H776.61ZM777.73 1308.39H778.85V1319.6H777.73ZM778.85 1308.39H779.97V1319.6H778.85ZM779.97 1308.39H781.10V1319.6H779.97ZM781.10 1308.39H782.22V1319.6H781.10ZM782.22 1297.18H783.34V1319.6H782.22ZM783.34 1297.18H784.46V1319.6H783.34ZM784.46 1297.18H785.58V1319.6H784.46ZM785.58 1297.18H786.70V1319.6H785.58ZM786.70 1297.18H787.82V1319.6H786.70ZM787.82 1297.18H788.95V1319.6H787.82ZM788.95 1297.18H790.07V1319.6H788.95ZM790.07 1297.18H791.19V1319.6H790.07ZM791.19 1308.39H792.31V1319.6H791.19ZM792.31 1297.18H793.43V1319.6H792.31ZM793.43 1297.18H794.55V1319.6H793.43ZM794.55 1308.39H795.67V1319.6H794.55ZM795.67 1308.39H796.80V1319.6H795.67ZM796.80 1308.39H797.92V1319.6H796.80ZM797.92 1308.39H799.04V1319.6H797.92ZM799.04 1308.39H800.16V1319.6H799.04ZM800.16 1308.39H801.28V1319.6H800.16ZM801.28 1308.39H802.40V1319.6H801.28ZM802.40 1297.18H803.52V1319.6H802.40ZM803.52 1297.18H804.65V1319.6H803.52ZM804.65 1297.18H805.77V1319.6H804.65ZM805.77 1297.18H806.89V1319.6H805.77ZM806.89 1297.18H808.01V1319.6H806.89ZM808.01 1297.18H809.13V1319.6H808.01ZM809.13 1297.18H810.25V1319.6H809.13ZM810.25 1297.18H811.37V1319.6H810.25ZM811.37 1297.18H812.50V1319.6H811.37ZM812.50 1297.18H813.62V1319.6H812.50ZM813.62 1297.18H814.74V1319.6H813.62ZM814.74 1308.39H815.86V1319.6H814.74ZM815.86 1308.39H816.98V1319.6H815.86ZM816.98 1308.39H818.10V1319.6H816.98ZM818.10 1308.39H819.22V1319.6H818.10ZM819.22 1308.39H820.35V1319.6H819.22ZM820.35 1308.39H821.47V1319.6H820.35ZM821.47 1308.39H822.59V1319.6H821.47ZM822.59 1297.18H823.71V1319.6H822.59ZM823.71 1297.18H824.83V1319.6H823.71ZM824.83 1297.18H825.95V1319.6H824.83ZM825.95 1297.18H827.07V1319.6H825.95ZM827.07 1297.18H828.20V1319.6H827.07ZM828.20 1285.97H829.32V1319.6H828.20ZM829.32 1285.97H830.44V1319.6H829.32ZM830.44 1297.18H831.56V1319.6H830.44ZM831.56 1297.18H832.68V1319.6H831.56ZM832.68 1297.18H833.80V1319.6H832.68ZM833.80 1297.18H834.92V1319.6H833.80ZM834.92 1297.18H836.05V1319.6H834.92ZM836.05 1308.39H837.17V1319.6H836.05ZM837.17 1308.39H838.29V1319.6H837.17ZM838.29 1308.39H839.41V1319.6H838.29ZM839.41 1308.39H840.53V1319.6H839.41ZM840.53 1297.18H841.65V1319.6H840.53ZM841.65 1308.39H842.77V1319.6H841.65ZM842.77 1308.39H843.90V1319.6H842.77ZM843.90 1308.39H845.02V1319.6H843.90ZM845.02 1297.18H846.14V1319.6H845.02ZM846.14 1297.18H847.26V1319.6H846.14ZM847.26 1297.18H848.38V1319.6H847.26ZM848.38 1285.97H849.50V1319.6H848.38ZM849.50 1297.18H850.62V1319.6H849.50ZM850.62 1297.18H851.75V1319.6H850.62ZM851.75 1297.18H852.87V1319.6H851.75ZM852.87 1297.18H853.99V1319.6H852.87ZM853.99 1297.18H855.11V1319.6H853.99ZM855.11 1297.18H856.23V1319.6H855.11ZM856.23 1297.18H857.35V1319.6H856.23ZM857.35 1285.97H858.47V1319.6H857.35ZM858.47 1297.18H859.60V1319.6H858.47ZM859.60 1308.39H860.72V1319.6H859.60ZM860.72 1308.39H861.84V1319.6H860.72ZM861.84 1308.39H862.96V1319.6H861.84ZM862.96 1308.39H864.08V1319.6H862.96ZM864.08 1308.39H865.20V1319.6H864.08ZM865.20 1308.39H866.32V1319.6H865.20ZM866.32 1308.39H867.45V1319.6H866.32ZM867.45 1308.39H868.57V1319.6H867.45ZM868.57 1285.97H869.69V1319.6H868.57ZM869.69 1297.18H870.81V1319.6H869.69ZM870.81 1297.18H871.93V1319.6H870.81ZM871.93 1297.18H873.05V1319.6H871.93ZM873.05 1297.18H874.17V1319.6H873.05ZM874.17 1297.18H875.30V1319.6H874.17ZM875.30 1297.18H876.42V1319.6H875.30ZM876.42 1297.18H877.54V1319.6H876.42ZM877.54 1297.18H878.66V1319.6H877.54ZM878.66 1297.18H879.78V1319.6H878.66ZM879.78 1297.18H880.90V1319.6H879.78ZM880.90 1308.39H882.02V1319.6H880.90ZM882.02 1308.39H883.15V1319.6H882.02ZM883.15 1308.39H884.27V1319.6H883.15ZM884.27 1308.39H885.39V1319.6H884.27ZM885.39 1308.39H886.51V1319.6H885.39ZM886.51 1308.39H887.63V1319.6H886.51ZM887.63 1308.39H888.75V1319.6H887.63ZM888.75 1297.18H889.87V1319.6H888.75ZM889.87 1297.18H891.00V1319.6H889.87ZM891.00 1297.18H892.12V1319.6H891.00ZM892.12 1297.18H893.24V1319.6H892.12ZM893.24 1297.18H894.36V1319.6H893.24ZM894.36 1297.18H895.48V1319.6H894.36ZM895.48 1297.18H896.60V1319.6H895.48ZM896.60 1297.18H897.72V1319.6H896.60ZM897.72 1297.18H898.85V1319.6H897.72ZM898.85 1297.18H899.97V1319.6H898.85ZM899.97 1297.18H901.09V1319.6H899.97ZM901.09 1297.18H902.21V1319.6H901.09ZM902.21 1308.39H903.33V1319.6H902.21ZM903.33 1308.39H904.45V1319.6H903.33ZM904.45 1308.39H905.57V1319.6H904.45ZM905.57 1308.39H906.70V1319.6H905.57ZM906.70 1308.39H907.82V1319.6H906.70ZM907.82 1297.18H908.94V1319.6H907.82ZM908.94 1308.39H910.06V1319.6H908.94ZM910.06 1308.39H911.18V1319.6H910.06ZM911.18 1297.18H912.30V1319.6H911.18ZM912.30 1297.18H913.42V1319.6H912.30ZM913.42 1297.18H914.55V1319.6H913.42ZM914.55 1297.18H915.67V1319.6H914.55ZM915.67 1297.18H916.79V1319.6H915.67ZM916.79 1297.18H917.91V1319.6H916.79ZM917.91 1297.18H919.03V1319.6H917.91ZM919.03 1297.18H920.15V1319.6H919.03ZM920.15 1285.97H921.27V1319.6H920.15ZM921.27 1297.18H922.40V1319.6H921.27ZM922.40 1297.18H923.52V1319.6H922.40ZM923.52 1308.39H924.64V1319.6H923.52ZM924.64 1308.39H925.76V1319.6H924.64ZM925.76 1308.39H926.88V1319.6H925.76ZM926.88 1308.39H928.00V1319.6H926.88ZM928.00 1308.39H929.12V1319.6H928.00ZM929.12 1308.39H930.25V1319.6H929.12ZM930.25 1308.39H931.37V1319.6H930.25ZM931.37 1308.39H932.49V1319.6H931.37ZM932.49 1297.18H933.61V1319.6H932.49ZM933.61 1285.97H934.73V1319.6H933.61ZM934.73 1297.18H935.85V1319.6H934.73ZM935.85 1297.18H936.97V1319.6H935.85ZM936.97 1297.18H938.10V1319.6H936.97ZM938.10 1297.18H939.22V1319.6H938.10ZM939.22 1285.97H940.34V1319.6H939.22ZM940.34 1297.18H941.46V1319.6H940.34ZM941.46 1297.18H942.58V1319.6H941.46ZM942.58 1297.18H943.70V1319.6H942.58ZM943.70 1297.18H944.82V1319.6H943.70ZM944.82 1308.39H945.95V1319.6H944.82ZM945.95 1308.39H947.07V1319.6H945.95ZM947.07 1308.39H948.19V1319.6H947.07ZM948.19 1308.39H949.31V1319.6H948.19ZM949.31 1297.18H950.43V1319.6H949.31ZM950.43 1308.39H951.55V1319.6H950.43ZM951.55 1308.39H952.67V1319.6H951.55ZM952.67 1308.39H953.80V1319.6H952.67ZM953.80 1308.39H954.92V1319.6H953.80ZM954.92 1285.97H956.04V1319.6H954.92ZM956.04 1285.97H957.16V1319.6H956.04ZM957.16 1297.18H958.28V1319.6H957.16ZM958.28 1297.18H959.40V1319.6H958.28ZM959.40 1297.18H960.52V1319.6H959.40ZM960.52 1297.18H961.65V1319.6H960.52ZM961.65 1285.97H962.77V1319.6H961.65ZM962.77 1285.97H963.89V1319.6H962.77ZM963.89 1297.18H965.01V1319.6H963.89ZM965.01 1308.39H966.13V1319.6H965.01ZM966.13 1308.39H967.25V1319.6H966.13ZM967.25 1308.39H968.37V1319.6H967.25ZM968.37 1308.39H969.50V1319.6H968.37ZM969.50 1308.39H970.62V1319.6H969.50ZM970.62 1308.39H971.74V1319.6H970.62ZM971.74 1308.39H972.86V1319.6H971.74ZM972.86 1308.39H973.98V1319.6H972.86ZM973.98 1308.39H975.10V1319.6H973.98ZM975.10 1297.18H976.22V1319.6H975.10ZM976.22 1308.39H977.35V1319.6H976.22ZM977.35 1308.39H978.47V1319.6H977.35ZM978.47 1308.39H979.59V1319.6H978.47ZM979.59 1297.18H980.71V1319.6H979.59ZM980.71 1297.18H981.83V1319.6H980.71ZM981.83 1297.18H982.95V1319.6H981.83ZM982.95 1297.18H984.07V1319.6H982.95ZM984.07 1297.18H985.20V1319.6H984.07ZM985.20 1297.18H986.32V1319.6H985.20ZM986.32 1297.18H987.44V1319.6H986.32ZM987.44 1297.18H988.56V1319.6H987.44ZM988.56 1308.39H989.68V1319.6H988.56ZM989.68 1308.39H990.80V1319.6H989.68ZM990.80 1308.39H991.92V1319.6H990.80ZM991.92 1308.39H993.05V1319.6H991.92ZM993.05 1308.39H994.17V1319.6H993.05ZM994.17 1308.39H995.29V1319.6H994.17ZM995.29 1297.18H996.41V1319.6H995.29ZM996.41 1308.39H997.53V1319.6H996.41ZM997.53 1308.39H998.65V1319.6H997.53ZM998.65 1308.39H999.77V1319.6H998.65ZM999.77 1297.18H1000.90V1319.6H999.77ZM1000.90 1297.18H1002.02V1319.6H1000.90ZM1002.02 1297.18H1003.14V1319.6H1002.02ZM1003.14 1297.18H1004.26V1319.6H1003.14ZM1004.26 1285.97H1005.38V1319.6H1004.26ZM1005.38 1285.97H1006.50V1319.6H1005.38ZM1006.50 1297.18H1007.62V1319.6H1006.50ZM1007.62 1308.39H1008.75V1319.6H1007.62ZM1008.75 1308.39H1009.87V1319.6H1008.75ZM1009.87 1308.39H1010.99V1319.6H1009.87ZM1010.99 1308.39H1012.11V1319.6H1010.99ZM1012.11 1308.39H1013.23V1319.6H1012.11ZM1013.23 1308.39H1014.35V1319.6H1013.23ZM1014.35 1308.39H1015.47V1319.6H1014.35ZM1015.47 1308.39H1016.60V1319.6H1015.47ZM1016.60 1308.39H1017.72V1319.6H1016.60ZM1017.72 1308.39H1018.84V1319.6H1017.72ZM1018.84 1308.39H1019.96V1319.6H1018.84ZM1019.96 1297.18H1021.08V1319.6H1019.96ZM1021.08 1297.18H1022.20V1319.6H1021.08ZM1022.20 1297.18H1023.32V1319.6H1022.20ZM1023.32 1285.97H1024.45V1319.6H1023.32ZM1024.45 1285.97H1025.57V1319.6H1024.45ZM1025.57 1297.18H1026.69V1319.6H1025.57ZM1026.69 1297.18H1027.81V1319.6H1026.69ZM1027.81 1297.18H1028.93V1319.6H1027.81ZM1028.93 1297.18H1030.05V1319.6H1028.93ZM1030.05 1297.18H1031.17V1319.6H1030.05ZM1031.17 1308.39H1032.30V1319.6H1031.17ZM1032.30 1308.39H1033.42V1319.6H1032.30ZM1033.42 1297.18H1034.54V1319.6H1033.42ZM1034.54 1308.39H1035.66V1319.6H1034.54ZM1035.66 1308.39H1036.78V1319.6H1035.66ZM1036.78 1308.39H1037.90V1319.6H1036.78ZM1037.90 1297.18H1039.02V1319.6H1037.90ZM1039.02 1297.18H1040.15V1319.6H1039.02ZM1040.15 1308.39H1041.27V1319.6H1040.15ZM1041.27 1297.18H1042.39V1319.6H1041.27ZM1042.39 1297.18H1043.51V1319.6H1042.39ZM1043.51 1297.18H1044.63V1319.6H1043.51ZM1044.63 1297.18H1045.75V1319.6H1044.63ZM1045.75 1297.18H1046.88V1319.6H1045.75ZM1046.87 1297.18H1048.00V1319.6H1046.87ZM1048.00 1297.18H1049.12V1319.6H1048.00ZM1049.12 1297.18H1050.24V1319.6H1049.12ZM1050.24 1297.18H1051.36V1319.6H1050.24ZM1051.36 1297.18H1052.48V1319.6H1051.36ZM1052.48 1297.18H1053.60V1319.6H1052.48ZM1053.60 1297.18H1054.72V1319.6H1053.60ZM1054.72 1297.18H1055.85V1319.6H1054.72ZM1055.85 1308.39H1056.97V1319.6H1055.85ZM1056.97 1308.39H1058.09V1319.6H1056.97ZM1058.09 1297.18H1059.21V1319.6H1058.09ZM1059.21 1297.18H1060.33V1319.6H1059.21ZM1060.33 1297.18H1061.45V1319.6H1060.33ZM1061.45 1297.18H1062.57V1319.6H1061.45ZM1062.57 1297.18H1063.70V1319.6H1062.57ZM1063.70 1297.18H1064.82V1319.6H1063.70ZM1064.82 1297.18H1065.94V1319.6H1064.82ZM1065.94 1297.18H1067.06V1319.6H1065.94ZM1067.06 1297.18H1068.18V1319.6H1067.06ZM1068.18 1297.18H1069.30V1319.6H1068.18ZM1069.30 1297.18H1070.42V1319.6H1069.30ZM1070.42 1308.39H1071.55V1319.6H1070.42ZM1071.55 1297.18H1072.67V1319.6H1071.55ZM1072.67 1297.18H1073.79V1319.6H1072.67ZM1073.79 1297.18H1074.91V1319.6H1073.79ZM1074.91 1297.18H1076.03V1319.6H1074.91ZM1076.03 1297.18H1077.15V1319.6H1076.03ZM1077.15 1297.18H1078.27V1319.6H1077.15ZM1078.27 1308.39H1079.40V1319.6H1078.27ZM1079.40 1308.39H1080.52V1319.6H1079.40ZM1080.52 1308.39H1081.64V1319.6H1080.52ZM1081.64 1297.18H1082.76V1319.6H1081.64ZM1082.76 1297.18H1083.88V1319.6H1082.76ZM1083.88 1297.18H1085.00V1319.6H1083.88ZM1085.00 1297.18H1086.12V1319.6H1085.00ZM1086.12 1297.18H1087.25V1319.6H1086.12ZM1087.25 1297.18H1088.37V1319.6H1087.25ZM1088.37 1297.18H1089.49V1319.6H1088.37ZM1089.49 1308.39H1090.61V1319.6H1089.49ZM1090.61 1297.18H1091.73V1319.6H1090.61ZM1091.73 1308.39H1092.85V1319.6H1091.73ZM1092.85 1308.39H1093.97V1319.6H1092.85ZM1093.97 1297.18H1095.10V1319.6H1093.97ZM1095.10 1297.18H1096.22V1319.6H1095.10ZM1096.22 1308.39H1097.34V1319.6H1096.22ZM1097.34 1297.18H1098.46V1319.6H1097.34ZM1098.46 1308.39H1099.58V1319.6H1098.46ZM1099.58 1297.18H1100.70V1319.6H1099.58ZM1100.70 1297.18H1101.82V1319.6H1100.70ZM1101.82 1297.18H1102.95V1319.6H1101.82ZM1102.95 1297.18H1104.07V1319.6H1102.95ZM1104.07 1297.18H1105.19V1319.6H1104.07ZM1105.19 1297.18H1106.31V1319.6H1105.19ZM1106.31 1297.18H1107.43V1319.6H1106.31ZM1107.43 1308.39H1108.55V1319.6H1107.43ZM1108.55 1297.18H1109.67V1319.6H1108.55ZM1109.67 1297.18H1110.80V1319.6H1109.67ZM1110.80 1297.18H1111.92V1319.6H1110.80ZM1111.92 1297.18H1113.04V1319.6H1111.92ZM1113.04 1297.18H1114.16V1319.6H1113.04ZM1114.16 1297.18H1115.28V1319.6H1114.16ZM1115.28 1297.18H1116.40V1319.6H1115.28ZM1116.40 1297.18H1117.52V1319.6H1116.40ZM1117.52 1297.18H1118.65V1319.6H1117.52ZM1118.65 1297.18H1119.77V1319.6H1118.65ZM1119.77 1297.18H1120.89V1319.6H1119.77ZM1120.89 1297.18H1122.01V1319.6H1120.89ZM1122.01 1297.18H1123.13V1319.6H1122.01ZM1123.13 1297.18H1124.25V1319.6H1123.13ZM1124.25 1297.18H1125.37V1319.6H1124.25ZM1125.37 1297.18H1126.50V1319.6H1125.37ZM1126.50 1297.18H1127.62V1319.6H1126.50ZM1127.62 1297.18H1128.74V1319.6H1127.62ZM1128.74 1297.18H1129.86V1319.6H1128.74ZM1129.86 1297.18H1130.98V1319.6H1129.86ZM1130.98 1297.18H1132.10V1319.6H1130.98ZM1132.10 1308.39H1133.22V1319.6H1132.10ZM1133.22 1297.18H1134.35V1319.6H1133.22ZM1134.35 1297.18H1135.47V1319.6H1134.35ZM1135.47 1308.39H1136.59V1319.6H1135.47ZM1136.59 1297.18H1137.71V1319.6H1136.59ZM1137.71 1297.18H1138.83V1319.6H1137.71ZM1138.83 1308.39H1139.95V1319.6H1138.83ZM1139.95 1308.39H1141.07V1319.6H1139.95ZM1141.07 1297.18H1142.20V1319.6H1141.07ZM1142.20 1297.18H1143.32V1319.6H1142.20ZM1143.32 1297.18H1144.44V1319.6H1143.32ZM1144.44 1308.39H1145.56V1319.6H1144.44ZM1145.56 1297.18H1146.68V1319.6H1145.56ZM1146.68 1308.39H1147.80V1319.6H1146.68ZM1147.80 1308.39H1148.92V1319.6H1147.80ZM1148.92 1297.18H1150.05V1319.6H1148.92ZM1150.05 1297.18H1151.17V1319.6H1150.05ZM1151.17 1297.18H1152.29V1319.6H1151.17ZM1152.29 1297.18H1153.41V1319.6H1152.29ZM1153.41 1308.39H1154.53V1319.6H1153.41ZM1154.53 1297.18H1155.65V1319.6H1154.53ZM1155.65 1297.18H1156.77V1319.6H1155.65ZM1156.77 1297.18H1157.90V1319.6H1156.77ZM1157.90 1308.39H1159.02V1319.6H1157.90ZM1159.02 1297.18H1160.14V1319.6H1159.02ZM1160.14 1297.18H1161.26V1319.6H1160.14ZM1161.26 1297.18H1162.38V1319.6H1161.26ZM1162.38 1297.18H1163.50V1319.6H1162.38ZM1163.50 1297.18H1164.62V1319.6H1163.50ZM1164.62 1297.18H1165.75V1319.6H1164.62ZM1165.75 1297.18H1166.87V1319.6H1165.75ZM1166.87 1308.39H1167.99V1319.6H1166.87ZM1167.99 1297.18H1169.11V1319.6H1167.99ZM1169.11 1297.18H1170.23V1319.6H1169.11ZM1170.23 1308.39H1171.35V1319.6H1170.23ZM1171.35 1297.18H1172.47V1319.6H1171.35ZM1172.47 1297.18H1173.60V1319.6H1172.47ZM1173.60 1297.18H1174.72V1319.6H1173.60ZM1174.72 1297.18H1175.84V1319.6H1174.72ZM1175.84 1297.18H1176.96V1319.6H1175.84ZM1176.96 1297.18H1178.08V1319.6H1176.96ZM1178.08 1297.18H1179.20V1319.6H1178.08ZM1179.20 1297.18H1180.32V1319.6H1179.20ZM1180.32 1297.18H1181.45V1319.6H1180.32ZM1181.45 1297.18H1182.57V1319.6H1181.45ZM1182.57 1308.39H1183.69V1319.6H1182.57ZM1183.69 1308.39H1184.81V1319.6H1183.69ZM1184.81 1297.18H1185.93V1319.6H1184.81ZM1185.93 1297.18H1187.05V1319.6H1185.93ZM1187.05 1297.18H1188.17V1319.6H1187.05ZM1188.17 1297.18H1189.30V1319.6H1188.17ZM1189.30 1297.18H1190.42V1319.6H1189.30ZM1190.42 1297.18H1191.54V1319.6H1190.42ZM1191.54 1308.39H1192.66V1319.6H1191.54ZM1192.66 1297.18H1193.78V1319.6H1192.66ZM1193.78 1308.39H1194.90V1319.6H1193.78ZM1194.90 1297.18H1196.02V1319.6H1194.90ZM1196.02 1297.18H1197.15V1319.6H1196.02ZM1197.15 1297.18H1198.27V1319.6H1197.15ZM1198.27 1297.18H1199.39V1319.6H1198.27ZM1199.39 1297.18H1200.51V1319.6H1199.39ZM1200.51 1308.39H1201.63V1319.6H1200.51ZM1201.63 1297.18H1202.75V1319.6H1201.63ZM1202.75 1297.18H1203.88V1319.6H1202.75ZM1203.87 1297.18H1205.00V1319.6H1203.87ZM1353.02 1308.39H1354.15V1319.6H1353.02ZM1354.15 1308.39H1355.27V1319.6H1354.15ZM1355.27 1308.39H1356.39V1319.6H1355.27ZM1356.39 1308.39H1357.51V1319.6H1356.39ZM1357.51 1308.39H1358.63V1319.6H1357.51ZM1358.63 1308.39H1359.75V1319.6H1358.63ZM1359.75 1308.39H1360.88V1319.6H1359.75ZM1360.87 1308.39H1362.00V1319.6H1360.87ZM1362.00 1308.39H1363.12V1319.6H1362.00ZM1363.12 1308.39H1364.24V1319.6H1363.12ZM1364.24 1308.39H1365.36V1319.6H1364.24ZM1365.36 1308.39H1366.48V1319.6H1365.36ZM1366.48 1308.39H1367.60V1319.6H1366.48ZM1367.60 1308.39H1368.72V1319.6H1367.60ZM1368.72 1308.39H1369.85V1319.6H1368.72ZM1369.85 1308.39H1370.97V1319.6H1369.85ZM1370.97 1297.18H1372.09V1319.6H1370.97ZM1372.09 1297.18H1373.21V1319.6H1372.09ZM1373.21 1297.18H1374.33V1319.6H1373.21ZM1374.33 1297.18H1375.45V1319.6H1374.33ZM1375.45 1297.18H1376.57V1319.6H1375.45ZM1376.57 1297.18H1377.70V1319.6H1376.57ZM1377.70 1297.18H1378.82V1319.6H1377.70ZM1378.82 1308.39H1379.94V1319.6H1378.82ZM1379.94 1308.39H1381.06V1319.6H1379.94ZM1381.06 1308.39H1382.18V1319.6H1381.06ZM1382.18 1308.39H1383.30V1319.6H1382.18ZM1383.30 1308.39H1384.42V1319.6H1383.30ZM1384.42 1308.39H1385.55V1319.6H1384.42ZM1385.55 1308.39H1386.67V1319.6H1385.55ZM1386.67 1308.39H1387.79V1319.6H1386.67ZM1387.79 1308.39H1388.91V1319.6H1387.79ZM1388.91 1308.39H1390.03V1319.6H1388.91ZM1390.03 1308.39H1391.15V1319.6H1390.03ZM1391.15 1308.39H1392.27V1319.6H1391.15ZM1392.27 1308.39H1393.40V1319.6H1392.27ZM1393.40 1308.39H1394.52V1319.6H1393.40ZM1394.52 1285.97H1395.64V1319.6H1394.52ZM1395.64 1285.97H1396.76V1319.6H1395.64ZM1396.76 1285.97H1397.88V1319.6H1396.76ZM1397.88 1285.97H1399.00V1319.6H1397.88ZM1399.00 1285.97H1400.12V1319.6H1399.00ZM1400.12 1285.97H1401.25V1319.6H1400.12ZM1401.25 1285.97H1402.37V1319.6H1401.25ZM1402.37 1285.97H1403.49V1319.6H1402.37ZM1403.49 1285.97H1404.61V1319.6H1403.49ZM1404.61 1285.97H1405.73V1319.6H1404.61ZM1405.73 1285.97H1406.85V1319.6H1405.73ZM1406.85 1285.97H1407.97V1319.6H1406.85ZM1407.97 1252.33H1409.10V1319.6H1407.97ZM1409.10 1285.97H1410.22V1319.6H1409.10ZM1410.22 1297.18H1411.34V1319.6H1410.22ZM1411.34 1297.18H1412.46V1319.6H1411.34ZM1412.46 1308.39H1413.58V1319.6H1412.46ZM1413.58 1308.39H1414.70V1319.6H1413.58ZM1414.70 1308.39H1415.82V1319.6H1414.70ZM1415.82 1308.39H1416.95V1319.6H1415.82ZM1416.95 1297.18H1418.07V1319.6H1416.95ZM1418.07 1297.18H1419.19V1319.6H1418.07ZM1419.19 1297.18H1420.31V1319.6H1419.19ZM1420.31 1297.18H1421.43V1319.6H1420.31ZM1421.43 1297.18H1422.55V1319.6H1421.43ZM1422.55 1297.18H1423.67V1319.6H1422.55ZM1423.67 1308.39H1424.80V1319.6H1423.67ZM1424.80 1308.39H1425.92V1319.6H1424.80ZM1425.92 1308.39H1427.04V1319.6H1425.92ZM1427.04 1308.39H1428.16V1319.6H1427.04ZM1428.16 1308.39H1429.28V1319.6H1428.16ZM1429.28 1308.39H1430.40V1319.6H1429.28ZM1430.40 1308.39H1431.52V1319.6H1430.40ZM1431.52 1308.39H1432.65V1319.6H1431.52ZM1432.65 1308.39H1433.77V1319.6H1432.65ZM1433.77 1297.18H1434.89V1319.6H1433.77ZM1434.89 1297.18H1436.01V1319.6H1434.89ZM1436.01 1308.39H1437.13V1319.6H1436.01ZM1437.13 1308.39H1438.25V1319.6H1437.13ZM1438.25 1297.18H1439.37V1319.6H1438.25ZM1439.37 1297.18H1440.50V1319.6H1439.37ZM1440.50 1297.18H1441.62V1319.6H1440.50ZM1441.62 1308.39H1442.74V1319.6H1441.62ZM1442.74 1297.18H1443.86V1319.6H1442.74ZM1443.86 1308.39H1444.98V1319.6H1443.86ZM1444.98 1297.18H1446.10V1319.6H1444.98ZM1446.10 1297.18H1447.22V1319.6H1446.10ZM1447.22 1308.39H1448.35V1319.6H1447.22ZM1448.35 1297.18H1449.47V1319.6H1448.35ZM1449.47 1297.18H1450.59V1319.6H1449.47ZM1450.59 1297.18H1451.71V1319.6H1450.59ZM1451.71 1297.18H1452.83V1319.6H1451.71ZM1452.83 1308.39H1453.95V1319.6H1452.83ZM1453.95 1297.18H1455.07V1319.6H1453.95ZM1455.07 1297.18H1456.20V1319.6H1455.07ZM1456.20 1297.18H1457.32V1319.6H1456.20ZM1457.32 1308.39H1458.44V1319.6H1457.32ZM1458.44 1297.18H1459.56V1319.6H1458.44ZM1459.56 1308.39H1460.68V1319.6H1459.56ZM1460.68 1308.39H1461.80V1319.6H1460.68ZM1461.80 1308.39H1462.92V1319.6H1461.80ZM1462.92 1308.39H1464.05V1319.6H1462.92ZM1464.05 1308.39H1465.17V1319.6H1464.05ZM1465.17 1297.18H1466.29V1319.6H1465.17ZM1466.29 1297.18H1467.41V1319.6H1466.29ZM1467.41 1297.18H1468.53V1319.6H1467.41ZM1468.53 1297.18H1469.65V1319.6H1468.53ZM1469.65 1297.18H1470.77V1319.6H1469.65ZM1470.77 1308.39H1471.90V1319.6H1470.77ZM1471.90 1297.18H1473.02V1319.6H1471.90ZM1473.02 1297.18H1474.14V1319.6H1473.02ZM1474.14 1297.18H1475.26V1319.6H1474.14ZM1475.26 1308.39H1476.38V1319.6H1475.26ZM1476.38 1297.18H1477.50V1319.6H1476.38ZM1477.50 1308.39H1478.62V1319.6H1477.50ZM1478.62 1308.39H1479.75V1319.6H1478.62ZM1479.75 1297.18H1480.87V1319.6H1479.75ZM1480.87 1308.39H1481.99V1319.6H1480.87ZM1481.99 1308.39H1483.11V1319.6H1481.99ZM1483.11 1297.18H1484.23V1319.6H1483.11ZM1484.23 1308.39H1485.35V1319.6H1484.23ZM1485.35 1308.39H1486.47V1319.6H1485.35ZM1486.47 1297.18H1487.60V1319.6H1486.47ZM1487.60 1297.18H1488.72V1319.6H1487.60ZM1488.72 1308.39H1489.84V1319.6H1488.72ZM1489.84 1308.39H1490.96V1319.6H1489.84ZM1490.96 1297.18H1492.08V1319.6H1490.96ZM1492.08 1297.18H1493.20V1319.6H1492.08ZM1493.20 1308.39H1494.32V1319.6H1493.20ZM1494.32 1308.39H1495.45V1319.6H1494.32ZM1495.45 1308.39H1496.57V1319.6H1495.45ZM1496.57 1297.18H1497.69V1319.6H1496.57ZM1497.69 1308.39H1498.81V1319.6H1497.69ZM1498.81 1297.18H1499.93V1319.6H1498.81ZM1499.93 1308.39H1501.05V1319.6H1499.93ZM1501.05 1308.39H1502.17V1319.6H1501.05ZM1502.17 1308.39H1503.30V1319.6H1502.17ZM1503.30 1308.39H1504.42V1319.6H1503.30ZM1504.42 1297.18H1505.54V1319.6H1504.42ZM1505.54 1308.39H1506.66V1319.6H1505.54ZM1506.66 1308.39H1507.78V1319.6H1506.66ZM1507.78 1308.39H1508.90V1319.6H1507.78ZM1508.90 1297.18H1510.02V1319.6H1508.90ZM1510.02 1308.39H1511.15V1319.6H1510.02ZM1511.15 1297.18H1512.27V1319.6H1511.15ZM1512.27 1308.39H1513.39V1319.6H1512.27ZM1513.39 1308.39H1514.51V1319.6H1513.39ZM1514.51 1297.18H1515.63V1319.6H1514.51ZM1515.63 1297.18H1516.75V1319.6H1515.63ZM1516.75 1297.18H1517.87V1319.6H1516.75ZM1517.87 1297.18H1519.00V1319.6H1517.87ZM1519.00 1308.39H1520.12V1319.6H1519.00ZM1520.12 1297.18H1521.24V1319.6H1520.12ZM1521.24 1297.18H1522.36V1319.6H1521.24ZM1522.36 1308.39H1523.48V1319.6H1522.36ZM1523.48 1297.18H1524.60V1319.6H1523.48ZM1524.60 1308.39H1525.72V1319.6H1524.60ZM1525.72 1297.18H1526.85V1319.6H1525.72ZM1526.85 1297.18H1527.97V1319.6H1526.85ZM1676.00 1308.39H1677.12V1319.6H1676.00ZM1677.12 1308.39H1678.24V1319.6H1677.12ZM1678.24 1308.39H1679.36V1319.6H1678.24ZM1679.36 1308.39H1680.48V1319.6H1679.36ZM1680.48 1308.39H1681.60V1319.6H1680.48ZM1681.60 1308.39H1682.72V1319.6H1681.60ZM1682.72 1308.39H1683.85V1319.6H1682.72ZM1683.85 1308.39H1684.97V1319.6H1683.85ZM1684.97 1308.39H1686.09V1319.6H1684.97ZM1686.09 1308.39H1687.21V1319.6H1686.09ZM1687.21 1308.39H1688.33V1319.6H1687.21ZM1688.33 1308.39H1689.45V1319.6H1688.33ZM1689.45 1308.39H1690.57V1319.6H1689.45ZM1690.57 1308.39H1691.70V1319.6H1690.57ZM1691.70 1308.39H1692.82V1319.6H1691.70ZM1692.82 1308.39H1693.94V1319.6H1692.82ZM1693.94 1308.39H1695.06V1319.6H1693.94ZM1695.06 1308.39H1696.18V1319.6H1695.06ZM1696.18 1308.39H1697.30V1319.6H1696.18ZM1697.30 1308.39H1698.42V1319.6H1697.30ZM1698.42 1308.39H1699.55V1319.6H1698.42ZM1699.55 1308.39H1700.67V1319.6H1699.55ZM1700.67 1308.39H1701.79V1319.6H1700.67ZM1701.79 1308.39H1702.91V1319.6H1701.79ZM1702.91 1308.39H1704.03V1319.6H1702.91ZM1704.03 1308.39H1705.15V1319.6H1704.03ZM1705.15 1308.39H1706.27V1319.6H1705.15ZM1706.27 1308.39H1707.40V1319.6H1706.27ZM1707.40 1308.39H1708.52V1319.6H1707.40ZM1708.52 1308.39H1709.64V1319.6H1708.52ZM1709.64 1308.39H1710.76V1319.6H1709.64ZM1710.76 1308.39H1711.88V1319.6H1710.76ZM1711.88 1308.39H1713.00V1319.6H1711.88ZM1713.00 1308.39H1714.12V1319.6H1713.00ZM1714.12 1308.39H1715.25V1319.6H1714.12ZM1715.25 1308.39H1716.37V1319.6H1715.25ZM1716.37 1308.39H1717.49V1319.6H1716.37ZM1717.49 1308.39H1718.61V1319.6H1717.49ZM1718.61 1308.39H1719.73V1319.6H1718.61ZM1719.73 1308.39H1720.85V1319.6H1719.73ZM1720.85 1308.39H1721.97V1319.6H1720.85ZM1721.97 1308.39H1723.10V1319.6H1721.97ZM1723.10 1308.39H1724.22V1319.6H1723.10ZM1724.22 1308.39H1725.34V1319.6H1724.22ZM1725.34 1297.18H1726.46V1319.6H1725.34ZM1726.46 1297.18H1727.58V1319.6H1726.46ZM1727.58 1297.18H1728.70V1319.6H1727.58ZM1728.70 1308.39H1729.82V1319.6H1728.70ZM1729.82 1308.39H1730.95V1319.6H1729.82ZM1730.95 1297.18H1732.07V1319.6H1730.95ZM1732.07 1297.18H1733.19V1319.6H1732.07ZM1733.19 1297.18H1734.31V1319.6H1733.19ZM1734.31 1297.18H1735.43V1319.6H1734.31ZM1735.43 1308.39H1736.55V1319.6H1735.43ZM1736.55 1308.39H1737.67V1319.6H1736.55ZM1737.67 1308.39H1738.80V1319.6H1737.67ZM1738.80 1308.39H1739.92V1319.6H1738.80ZM1739.92 1308.39H1741.04V1319.6H1739.92ZM1741.04 1308.39H1742.16V1319.6H1741.04ZM1742.16 1308.39H1743.28V1319.6H1742.16ZM1743.28 1308.39H1744.40V1319.6H1743.28ZM1744.40 1308.39H1745.52V1319.6H1744.40ZM1745.52 1308.39H1746.65V1319.6H1745.52ZM1746.65 1308.39H1747.77V1319.6H1746.65ZM1747.77 1308.39H1748.89V1319.6H1747.77ZM1748.89 1308.39H1750.01V1319.6H1748.89ZM1750.01 1308.39H1751.13V1319.6H1750.01ZM1751.13 1297.18H1752.25V1319.6H1751.13ZM1752.25 1297.18H1753.37V1319.6H1752.25ZM1753.37 1297.18H1754.50V1319.6H1753.37ZM1754.50 1297.18H1755.62V1319.6H1754.50ZM1755.62 1308.39H1756.74V1319.6H1755.62ZM1756.74 1297.18H1757.86V1319.6H1756.74ZM1757.86 1308.39H1758.98V1319.6H1757.86ZM1758.98 1297.18H1760.10V1319.6H1758.98ZM1760.10 1297.18H1761.22V1319.6H1760.10ZM1761.22 1297.18H1762.35V1319.6H1761.22ZM1762.35 1308.39H1763.47V1319.6H1762.35ZM1763.47 1297.18H1764.59V1319.6H1763.47ZM1764.59 1297.18H1765.71V1319.6H1764.59ZM1765.71 1297.18H1766.83V1319.6H1765.71ZM1766.83 1297.18H1767.95V1319.6H1766.83ZM1767.95 1308.39H1769.07V1319.6H1767.95ZM1769.07 1297.18H1770.20V1319.6H1769.07ZM1770.20 1297.18H1771.32V1319.6H1770.20ZM1771.32 1297.18H1772.44V1319.6H1771.32ZM1772.44 1297.18H1773.56V1319.6H1772.44ZM1773.56 1297.18H1774.68V1319.6H1773.56ZM1774.68 1297.18H1775.80V1319.6H1774.68ZM1775.80 1297.18H1776.92V1319.6H1775.80ZM1776.92 1297.18H1778.05V1319.6H1776.92ZM1778.05 1308.39H1779.17V1319.6H1778.05ZM1779.17 1308.39H1780.29V1319.6H1779.17ZM1780.29 1308.39H1781.41V1319.6H1780.29ZM1781.41 1308.39H1782.53V1319.6H1781.41ZM1782.53 1308.39H1783.65V1319.6H1782.53ZM1783.65 1308.39H1784.77V1319.6H1783.65ZM1784.77 1308.39H1785.90V1319.6H1784.77ZM1785.90 1308.39H1787.02V1319.6H1785.90ZM1787.02 1308.39H1788.14V1319.6H1787.02ZM1788.14 1297.18H1789.26V1319.6H1788.14ZM1789.26 1297.18H1790.38V1319.6H1789.26ZM1790.38 1297.18H1791.50V1319.6H1790.38ZM1791.50 1297.18H1792.62V1319.6H1791.50ZM1792.62 1297.18H1793.75V1319.6H1792.62ZM1793.75 1297.18H1794.87V1319.6H1793.75ZM1794.87 1308.39H1795.99V1319.6H1794.87ZM1795.99 1297.18H1797.11V1319.6H1795.99ZM1797.11 1308.39H1798.23V1319.6H1797.11ZM1798.23 1297.18H1799.35V1319.6H1798.23ZM1799.35 1308.39H1800.47V1319.6H1799.35ZM1800.47 1308.39H1801.60V1319.6H1800.47ZM1801.60 1308.39H1802.72V1319.6H1801.60ZM1802.72 1297.18H1803.84V1319.6H1802.72ZM1803.84 1297.18H1804.96V1319.6H1803.84ZM1804.96 1308.39H1806.08V1319.6H1804.96ZM1806.08 1297.18H1807.20V1319.6H1806.08ZM1807.20 1308.39H1808.32V1319.6H1807.20ZM1808.32 1308.39H1809.45V1319.6H1808.32ZM1809.45 1308.39H1810.57V1319.6H1809.45ZM1810.57 1308.39H1811.69V1319.6H1810.57ZM1811.69 1308.39H1812.81V1319.6H1811.69ZM1812.81 1308.39H1813.93V1319.6H1812.81ZM1813.93 1308.39H1815.05V1319.6H1813.93ZM1815.05 1308.39H1816.17V1319.6H1815.05ZM1816.17 1308.39H1817.30V1319.6H1816.17ZM1817.30 1308.39H1818.42V1319.6H1817.30ZM1818.42 1308.39H1819.54V1319.6H1818.42ZM1819.54 1308.39H1820.66V1319.6H1819.54ZM1820.66 1297.18H1821.78V1319.6H1820.66ZM1821.78 1297.18H1822.90V1319.6H1821.78ZM1822.90 1308.39H1824.02V1319.6H1822.90ZM1824.02 1297.18H1825.15V1319.6H1824.02ZM1825.15 1297.18H1826.27V1319.6H1825.15ZM1826.27 1308.39H1827.39V1319.6H1826.27ZM1827.39 1297.18H1828.51V1319.6H1827.39ZM1828.51 1308.39H1829.63V1319.6H1828.51ZM1829.63 1297.18H1830.75V1319.6H1829.63ZM1830.75 1297.18H1831.87V1319.6H1830.75ZM1831.87 1308.39H1833.00V1319.6H1831.87ZM1833.00 1297.18H1834.12V1319.6H1833.00ZM1834.12 1297.18H1835.24V1319.6H1834.12ZM1835.24 1308.39H1836.36V1319.6H1835.24ZM1836.36 1308.39H1837.48V1319.6H1836.36ZM1837.48 1308.39H1838.60V1319.6H1837.48ZM1838.60 1297.18H1839.72V1319.6H1838.60ZM1839.72 1297.18H1840.85V1319.6H1839.72ZM1840.85 1308.39H1841.97V1319.6H1840.85ZM1841.97 1297.18H1843.09V1319.6H1841.97ZM1843.09 1308.39H1844.21V1319.6H1843.09ZM1844.21 1297.18H1845.33V1319.6H1844.21ZM1845.33 1297.18H1846.45V1319.6H1845.33ZM1846.45 1297.18H1847.57V1319.6H1846.45ZM1847.57 1297.18H1848.70V1319.6H1847.57ZM1848.70 1297.18H1849.82V1319.6H1848.70ZM1849.82 1308.39H1850.94V1319.6H1849.82ZM1998.97 1308.39H2000.09V1319.6H1998.97ZM2000.09 1207.49H2001.21V1319.6H2000.09ZM2001.21 1207.49H2002.33V1319.6H2001.21ZM2002.33 1207.49H2003.45V1319.6H2002.33ZM2003.45 1207.49H2004.57V1319.6H2003.45ZM2004.57 1229.91H2005.70V1319.6H2004.57ZM2005.70 1229.91H2006.82V1319.6H2005.70ZM2006.82 1285.97H2007.94V1319.6H2006.82ZM2007.94 1308.39H2009.06V1319.6H2007.94ZM2009.06 1308.39H2010.18V1319.6H2009.06ZM2010.18 1308.39H2011.30V1319.6H2010.18ZM2011.30 1308.39H2012.42V1319.6H2011.30ZM2012.42 1308.39H2013.55V1319.6H2012.42ZM2013.55 1308.39H2014.67V1319.6H2013.55ZM2014.67 1308.39H2015.79V1319.6H2014.67ZM2015.79 1308.39H2016.91V1319.6H2015.79ZM2016.91 1308.39H2018.03V1319.6H2016.91ZM2018.03 1308.39H2019.15V1319.6H2018.03ZM2019.15 1308.39H2020.27V1319.6H2019.15ZM2020.27 1308.39H2021.40V1319.6H2020.27ZM2021.40 1308.39H2022.52V1319.6H2021.40ZM2022.52 1308.39H2023.64V1319.6H2022.52ZM2023.64 1308.39H2024.76V1319.6H2023.64ZM2024.76 1308.39H2025.88V1319.6H2024.76ZM2025.88 1308.39H2027.00V1319.6H2025.88ZM2027.00 1308.39H2028.12V1319.6H2027.00ZM2028.12 1308.39H2029.25V1319.6H2028.12ZM2029.25 1308.39H2030.37V1319.6H2029.25ZM2030.37 1308.39H2031.49V1319.6H2030.37ZM2031.49 1308.39H2032.61V1319.6H2031.49ZM2032.61 1308.39H2033.73V1319.6H2032.61ZM2033.73 1308.39H2034.85V1319.6H2033.73ZM2034.85 1308.39H2035.97V1319.6H2034.85ZM2035.97 1308.39H2037.10V1319.6H2035.97ZM2037.10 1308.39H2038.22V1319.6H2037.10ZM2038.22 1308.39H2039.34V1319.6H2038.22ZM2039.34 1308.39H2040.46V1319.6H2039.34ZM2040.46 1308.39H2041.58V1319.6H2040.46ZM2041.58 1308.39H2042.70V1319.6H2041.58ZM2042.70 1308.39H2043.82V1319.6H2042.70ZM2043.82 1308.39H2044.95V1319.6H2043.82ZM2044.95 1308.39H2046.07V1319.6H2044.95ZM2046.07 1308.39H2047.19V1319.6H2046.07ZM2047.19 1308.39H2048.31V1319.6H2047.19ZM2048.31 1308.39H2049.43V1319.6H2048.31ZM2049.43 1308.39H2050.55V1319.6H2049.43ZM2050.55 1308.39H2051.67V1319.6H2050.55ZM2051.67 1308.39H2052.80V1319.6H2051.67ZM2052.80 1308.39H2053.92V1319.6H2052.80ZM2053.92 1308.39H2055.04V1319.6H2053.92ZM2055.04 1308.39H2056.16V1319.6H2055.04ZM2056.16 1308.39H2057.28V1319.6H2056.16ZM2057.28 1308.39H2058.40V1319.6H2057.28ZM2058.40 1308.39H2059.52V1319.6H2058.40ZM2059.52 1308.39H2060.65V1319.6H2059.52ZM2060.65 1308.39H2061.77V1319.6H2060.65ZM2061.77 1308.39H2062.89V1319.6H2061.77ZM2062.89 1308.39H2064.01V1319.6H2062.89ZM2064.01 1308.39H2065.13V1319.6H2064.01ZM2065.13 1308.39H2066.25V1319.6H2065.13ZM2066.25 1297.18H2067.37V1319.6H2066.25ZM2067.37 1308.39H2068.50V1319.6H2067.37ZM2068.50 1308.39H2069.62V1319.6H2068.50ZM2069.62 1308.39H2070.74V1319.6H2069.62ZM2070.74 1308.39H2071.86V1319.6H2070.74ZM2071.86 1308.39H2072.98V1319.6H2071.86ZM2072.98 1308.39H2074.10V1319.6H2072.98ZM2074.10 1308.39H2075.22V1319.6H2074.10ZM2075.22 1308.39H2076.35V1319.6H2075.22ZM2076.35 1308.39H2077.47V1319.6H2076.35ZM2077.47 1308.39H2078.59V1319.6H2077.47ZM2078.59 1308.39H2079.71V1319.6H2078.59ZM2079.71 1308.39H2080.83V1319.6H2079.71ZM2080.83 1308.39H2081.95V1319.6H2080.83ZM2081.95 1308.39H2083.07V1319.6H2081.95ZM2083.07 1308.39H2084.20V1319.6H2083.07ZM2084.20 1297.18H2085.32V1319.6H2084.20ZM2085.32 1297.18H2086.44V1319.6H2085.32ZM2086.44 1308.39H2087.56V1319.6H2086.44ZM2087.56 1308.39H2088.68V1319.6H2087.56ZM2088.68 1308.39H2089.80V1319.6H2088.68ZM2089.80 1308.39H2090.92V1319.6H2089.80ZM2090.92 1297.18H2092.05V1319.6H2090.92ZM2092.05 1308.39H2093.17V1319.6H2092.05ZM2093.17 1308.39H2094.29V1319.6H2093.17ZM2094.29 1308.39H2095.41V1319.6H2094.29ZM2095.41 1308.39H2096.53V1319.6H2095.41ZM2097.65 1308.39H2098.77V1319.6H2097.65ZM2099.90 1308.39H2101.02V1319.6H2099.90ZM2101.02 1308.39H2102.14V1319.6H2101.02ZM2103.26 1308.39H2104.38V1319.6H2103.26ZM2105.50 1308.39H2106.62V1319.6H2105.50ZM2106.62 1308.39H2107.75V1319.6H2106.62ZM2107.75 1308.39H2108.87V1319.6H2107.75ZM2108.87 1308.39H2109.99V1319.6H2108.87ZM2109.99 1308.39H2111.11V1319.6H2109.99ZM2111.11 1308.39H2112.23V1319.6H2111.11ZM2112.23 1297.18H2113.35V1319.6H2112.23ZM2113.35 1308.39H2114.47V1319.6H2113.35ZM2114.47 1308.39H2115.60V1319.6H2114.47ZM2115.60 1308.39H2116.72V1319.6H2115.60ZM2116.72 1308.39H2117.84V1319.6H2116.72ZM2117.84 1297.18H2118.96V1319.6H2117.84ZM2118.96 1308.39H2120.08V1319.6H2118.96ZM2120.08 1308.39H2121.20V1319.6H2120.08ZM2121.20 1308.39H2122.32V1319.6H2121.20ZM2122.32 1308.39H2123.45V1319.6H2122.32ZM2123.45 1308.39H2124.57V1319.6H2123.45ZM2124.57 1308.39H2125.69V1319.6H2124.57ZM2126.81 1308.39H2127.93V1319.6H2126.81ZM2129.05 1308.39H2130.17V1319.6H2129.05ZM2131.30 1308.39H2132.42V1319.6H2131.30ZM2132.42 1308.39H2133.54V1319.6H2132.42ZM2133.54 1308.39H2134.66V1319.6H2133.54ZM2134.66 1297.18H2135.78V1319.6H2134.66ZM2135.78 1308.39H2136.90V1319.6H2135.78ZM2136.90 1308.39H2138.02V1319.6H2136.90ZM2138.02 1308.39H2139.15V1319.6H2138.02ZM2139.15 1308.39H2140.27V1319.6H2139.15ZM2140.27 1297.18H2141.39V1319.6H2140.27ZM2141.39 1308.39H2142.51V1319.6H2141.39ZM2142.51 1308.39H2143.63V1319.6H2142.51ZM2143.63 1308.39H2144.75V1319.6H2143.63ZM2144.75 1308.39H2145.87V1319.6H2144.75ZM2145.87 1297.18H2147.00V1319.6H2145.87ZM2147.00 1297.18H2148.12V1319.6H2147.00ZM2148.12 1308.39H2149.24V1319.6H2148.12ZM2149.24 1308.39H2150.36V1319.6H2149.24ZM2150.36 1308.39H2151.48V1319.6H2150.36ZM2151.48 1297.18H2152.60V1319.6H2151.48ZM2152.60 1308.39H2153.72V1319.6H2152.60ZM2153.72 1308.39H2154.85V1319.6H2153.72ZM2154.85 1308.39H2155.97V1319.6H2154.85ZM2155.97 1308.39H2157.09V1319.6H2155.97ZM2157.09 1297.18H2158.21V1319.6H2157.09ZM2158.21 1308.39H2159.33V1319.6H2158.21ZM2159.33 1308.39H2160.45V1319.6H2159.33ZM2160.45 1308.39H2161.57V1319.6H2160.45ZM2161.57 1308.39H2162.70V1319.6H2161.57ZM2162.70 1297.18H2163.82V1319.6H2162.70ZM2163.82 1308.39H2164.94V1319.6H2163.82ZM2164.94 1297.18H2166.06V1319.6H2164.94ZM2166.06 1308.39H2167.18V1319.6H2166.06ZM2167.18 1297.18H2168.30V1319.6H2167.18ZM2168.30 1308.39H2169.42V1319.6H2168.30ZM2169.42 1308.39H2170.55V1319.6H2169.42ZM2170.55 1308.39H2171.67V1319.6H2170.55ZM2171.67 1308.39H2172.79V1319.6H2171.67ZM2172.79 1297.18H2173.91V1319.6H2172.79ZM2321.94 1297.18H2323.06V1319.6H2321.94ZM2323.06 1308.39H2324.18V1319.6H2323.06ZM2324.18 1285.97H2325.30V1319.6H2324.18ZM2325.30 1297.18H2326.42V1319.6H2325.30ZM2326.42 1297.18H2327.55V1319.6H2326.42ZM2328.67 1308.39H2329.79V1319.6H2328.67ZM2329.79 1308.39H2330.91V1319.6H2329.79ZM2332.03 1308.39H2333.15V1319.6H2332.03ZM2334.27 1308.39H2335.40V1319.6H2334.27ZM2336.52 1308.39H2337.64V1319.6H2336.52ZM2337.64 1297.18H2338.76V1319.6H2337.64ZM2339.88 1308.39H2341.00V1319.6H2339.88ZM2342.12 1308.39H2343.25V1319.6H2342.12ZM2344.37 1308.39H2345.49V1319.6H2344.37ZM2345.49 1308.39H2346.61V1319.6H2345.49ZM2347.73 1308.39H2348.85V1319.6H2347.73ZM2349.97 1308.39H2351.10V1319.6H2349.97ZM2352.22 1308.39H2353.34V1319.6H2352.22ZM2353.34 1308.39H2354.46V1319.6H2353.34ZM2355.58 1308.39H2356.70V1319.6H2355.58ZM2357.82 1308.39H2358.95V1319.6H2357.82ZM2360.07 1308.39H2361.19V1319.6H2360.07ZM2361.19 1308.39H2362.31V1319.6H2361.19ZM2363.43 1308.39H2364.55V1319.6H2363.43ZM2365.67 1308.39H2366.80V1319.6H2365.67ZM2367.92 1308.39H2369.04V1319.6H2367.92ZM2369.04 1308.39H2370.16V1319.6H2369.04ZM2371.28 1308.39H2372.40V1319.6H2371.28ZM2373.52 1308.39H2374.65V1319.6H2373.52ZM2375.77 1308.39H2376.89V1319.6H2375.77ZM2378.01 1308.39H2379.13V1319.6H2378.01ZM2379.13 1308.39H2380.25V1319.6H2379.13ZM2381.37 1308.39H2382.50V1319.6H2381.37ZM2383.62 1308.39H2384.74V1319.6H2383.62ZM2385.86 1297.18H2386.98V1319.6H2385.86ZM2386.98 1297.18H2388.10V1319.6H2386.98ZM2389.22 1308.39H2390.35V1319.6H2389.22ZM2390.35 1308.39H2391.47V1319.6H2390.35ZM2392.59 1308.39H2393.71V1319.6H2392.59ZM2394.83 1308.39H2395.95V1319.6H2394.83ZM2397.07 1308.39H2398.20V1319.6H2397.07ZM2398.20 1308.39H2399.32V1319.6H2398.20ZM2400.44 1308.39H2401.56V1319.6H2400.44ZM2402.68 1308.39H2403.80V1319.6H2402.68ZM2404.92 1308.39H2406.05V1319.6H2404.92ZM2407.17 1308.39H2408.29V1319.6H2407.17ZM2408.29 1308.39H2409.41V1319.6H2408.29ZM2410.53 1308.39H2411.65V1319.6H2410.53ZM2412.77 1308.39H2413.90V1319.6H2412.77Z" fill="#9deac2"/>
<rect x="155.0" y="815.1" width="1.8" height="504.4999999999999" fill="#686868"/>
<rect x="143.4" y="1318.90" width="11.6" height="1.4" fill="#999"/>
<rect x="143.4" y="1262.84" width="11.6" height="1.4" fill="#999"/>
<rect x="143.4" y="1206.79" width="11.6" height="1.4" fill="#999"/>
<rect x="143.4" y="1150.73" width="11.6" height="1.4" fill="#999"/>
<rect x="143.4" y="1094.68" width="11.6" height="1.4" fill="#999"/>
<rect x="143.4" y="1038.62" width="11.6" height="1.4" fill="#999"/>
<rect x="143.4" y="982.57" width="11.6" height="1.4" fill="#999"/>
<rect x="143.4" y="926.51" width="11.6" height="1.4" fill="#999"/>
<rect x="143.4" y="870.46" width="11.6" height="1.4" fill="#999"/>
<rect x="143.4" y="814.40" width="11.6" height="1.4" fill="#999"/>
<rect x="155.0" y="1319.6" width="2261.7" height="1.3" fill="#666"/>
<rect x="155.30" y="1321.5" width="1.2" height="10.5" fill="#a8a8a8"/>
<rect x="478.27" y="1321.5" width="1.2" height="10.5" fill="#a8a8a8"/>
<rect x="801.24" y="1321.5" width="1.2" height="10.5" fill="#a8a8a8"/>
<rect x="1124.21" y="1321.5" width="1.2" height="10.5" fill="#a8a8a8"/>
<rect x="1447.19" y="1321.5" width="1.2" height="10.5" fill="#a8a8a8"/>
<rect x="1770.16" y="1321.5" width="1.2" height="10.5" fill="#a8a8a8"/>
<rect x="2093.13" y="1321.5" width="1.2" height="10.5" fill="#a8a8a8"/>
<text transform="translate(133.80,1326.90) scale(1.15,1)" x="0" y="0" font-size="20.5" fill="#444" text-anchor="end" stroke="#444" stroke-width="0.5">0</text>
<text transform="translate(133.80,1270.84) scale(1.15,1)" x="0" y="0" font-size="20.5" fill="#444" text-anchor="end" stroke="#444" stroke-width="0.5">5</text>
<text transform="translate(133.80,1214.79) scale(1.15,1)" x="0" y="0" font-size="20.5" fill="#444" text-anchor="end" stroke="#444" stroke-width="0.5">10</text>
<text transform="translate(133.80,1158.73) scale(1.15,1)" x="0" y="0" font-size="20.5" fill="#444" text-anchor="end" stroke="#444" stroke-width="0.5">15</text>
<text transform="translate(133.80,1102.68) scale(1.15,1)" x="0" y="0" font-size="20.5" fill="#444" text-anchor="end" stroke="#444" stroke-width="0.5">20</text>
<text transform="translate(133.80,1046.62) scale(1.15,1)" x="0" y="0" font-size="20.5" fill="#444" text-anchor="end" stroke="#444" stroke-width="0.5">25</text>
<text transform="translate(133.80,990.57) scale(1.15,1)" x="0" y="0" font-size="20.5" fill="#444" text-anchor="end" stroke="#444" stroke-width="0.5">30</text>
<text transform="translate(133.80,934.51) scale(1.15,1)" x="0" y="0" font-size="20.5" fill="#444" text-anchor="end" stroke="#444" stroke-width="0.5">35</text>
<text transform="translate(133.80,878.46) scale(1.15,1)" x="0" y="0" font-size="20.5" fill="#444" text-anchor="end" stroke="#444" stroke-width="0.5">40</text>
<text transform="translate(133.80,822.40) scale(1.15,1)" x="0" y="0" font-size="20.5" fill="#444" text-anchor="end" stroke="#444" stroke-width="0.5">45</text>
<text transform="translate(156.40,1356.80) scale(1.16,1)" x="0" y="0" font-size="20" fill="#111" text-anchor="middle" stroke="#111" stroke-width="0.45">ven. 10</text>
<text transform="translate(479.37,1356.80) scale(1.16,1)" x="0" y="0" font-size="20" fill="#111" text-anchor="middle" stroke="#111" stroke-width="0.45">sam. 11</text>
<text transform="translate(802.34,1356.80) scale(1.16,1)" x="0" y="0" font-size="20" fill="#111" text-anchor="middle" stroke="#111" stroke-width="0.45">dim. 12</text>
<text transform="translate(1125.31,1356.80) scale(1.16,1)" x="0" y="0" font-size="20" fill="#111" text-anchor="middle" stroke="#111" stroke-width="0.45">lun. 13</text>
<text transform="translate(1448.29,1356.80) scale(1.16,1)" x="0" y="0" font-size="20" fill="#111" text-anchor="middle" stroke="#111" stroke-width="0.45">mar. 14</text>
<text transform="translate(1771.26,1356.80) scale(1.16,1)" x="0" y="0" font-size="20" fill="#111" text-anchor="middle" stroke="#111" stroke-width="0.45">mer. 15</text>
<text transform="translate(2094.23,1356.80) scale(1.16,1)" x="0" y="0" font-size="20" fill="#111" text-anchor="middle" stroke="#111" stroke-width="0.45">jeu. 16</text>
<text transform="translate(87.5,1067.3) rotate(-90) scale(1.05,1.3)" x="0" y="0" font-size="20" fill="#333" stroke="#333" stroke-width="0.35" text-anchor="middle">kW</text>
<rect x="562.5" y="806.5" width="411.0" height="57.199999999999996" rx="8" fill="#ffffff" stroke="#808080" stroke-width="3.2"/>
<text transform="translate(778.00,846.40) scale(0.965,1)" x="0" y="0" font-size="29" fill="#111" text-anchor="middle" stroke="#111" stroke-width="0.35">Consommation: 723 kWh</text>
<rect x="1100.5" y="806.5" width="411.0" height="57.199999999999996" rx="8" fill="#ffffff" stroke="#808080" stroke-width="3.2"/>
<text transform="translate(1316.00,846.40) scale(0.975,1)" x="0" y="0" font-size="29" fill="#111" text-anchor="middle" stroke="#111" stroke-width="0.35">P Max :&#160; 44 kW</text>
<rect x="1610.5" y="806.5" width="411.0" height="57.199999999999996" rx="8" fill="#ffffff" stroke="#808080" stroke-width="3.2"/>
<text transform="translate(1826.00,846.40) scale(0.992,1)" x="0" y="0" font-size="29" fill="#111" text-anchor="middle" stroke="#111" stroke-width="0.35">P min : 0 kW</text>
<path d="M1990 40 H2405.5 V89.5 Q2405.5 97.7 2397.3 97.7 H1998.2 Q1990 97.7 1990 89.5 Z" fill="#ffffff"/>
<text transform="translate(2198.00,88.80) scale(1.086,1)" x="0" y="0" font-size="24" fill="#111" text-anchor="middle" font-weight="bold" >LHB-site-L347</text>
<rect x="1992.5" y="108.3" width="410.90000000000003" height="57.099999999999994" rx="8" fill="#ffffff" stroke="#808080" stroke-width="3.2"/>
<text transform="translate(2208.00,148.50) scale(0.965,1)" x="0" y="0" font-size="29" fill="#111" text-anchor="middle" stroke="#111" stroke-width="0.35">Consommation: 226 kWh</text>
<rect x="1992.5" y="178.5" width="410.90000000000003" height="57.099999999999994" rx="8" fill="#ffffff" stroke="#808080" stroke-width="3.2"/>
<text transform="translate(2208.00,217.80) scale(0.975,1)" x="0" y="0" font-size="29" fill="#111" text-anchor="middle" stroke="#111" stroke-width="0.35">P Max :&#160; 44 kW</text>
<rect x="1992.5" y="248.5" width="410.90000000000003" height="57.099999999999994" rx="8" fill="#ffffff" stroke="#808080" stroke-width="3.2"/>
<text transform="translate(2208.00,288.00) scale(0.992,1)" x="0" y="0" font-size="29" fill="#111" text-anchor="middle" stroke="#111" stroke-width="0.35">P min : 0 kW</text>
<rect x="1047.8" y="542.2" width="521.9" height="69.6" rx="8" fill="#ffffff" fill-opacity="0.9"/>
<text transform="translate(1313.40,588.90) scale(1.13,1)" x="0" y="0" font-size="29.5" fill="#0a1010" text-anchor="middle" font-weight="bold" >jeudi 16 avril 2026</text>
<rect x="176.5" y="49" width="481.3" height="77.6" fill="#0b0b17"/>
<clipPath id="cT"><path d="M180 40 H280 V96.5 L262 95.5 L250 93.8 L243 92.2 L224 93 L216.5 95 L215 102 L180 101 Z"/></clipPath>
<clipPath id="cB"><path d="M180 130 H280 V96.5 L262 95.5 L250 93.8 L243 92.2 L224 93 L216.5 95 L215 102 L180 101 Z"/></clipPath>
<g clip-path="url(#cT)" stroke="#00f0c8"><path d="M192 94.7 H211.5" fill="none" stroke-width="6.5" stroke-linecap="butt"/><path d="M211.4 94.7 C211.4 87.5 207.2 82.1 201.7 82.1 C196.2 82.1 192 87.5 192 94.7 C192 101.6 196.2 107.15 201.7 107.15 C205.5 107.15 208.6 105.6 211 103.4" fill="none" stroke-width="6.6" stroke-linecap="round"/><path d="M239.9 86.9 C237.6 83.6 234.4 82.1 230.6 82.1 C224.6 82.1 220.3 87.5 220.3 94.7 C220.3 101.9 224.6 107.2 230.6 107.2 C234.6 107.2 237.4 105.6 239.6 103.3" fill="none" stroke-width="6.6" stroke-linecap="round"/><ellipse cx="257.25" cy="94.75" rx="10.3" ry="12.35" fill="none" stroke-width="6.5"/></g>
<g clip-path="url(#cB)" stroke="#00b795"><path d="M192 94.7 H211.5" fill="none" stroke-width="6.5" stroke-linecap="butt"/><path d="M211.4 94.7 C211.4 87.5 207.2 82.1 201.7 82.1 C196.2 82.1 192 87.5 192 94.7 C192 101.6 196.2 107.15 201.7 107.15 C205.5 107.15 208.6 105.6 211 103.4" fill="none" stroke-width="6.6" stroke-linecap="round"/><path d="M239.9 86.9 C237.6 83.6 234.4 82.1 230.6 82.1 C224.6 82.1 220.3 87.5 220.3 94.7 C220.3 101.9 224.6 107.2 230.6 107.2 C234.6 107.2 237.4 105.6 239.6 103.3" fill="none" stroke-width="6.6" stroke-linecap="round"/><ellipse cx="257.25" cy="94.75" rx="10.3" ry="12.35" fill="none" stroke-width="6.5"/></g>
<path d="M197.4 75.1 L205.8 71.6" stroke="#00f0c8" stroke-width="5.8" stroke-linecap="round"/>
<g fill="none" stroke="#ffffff" stroke-width="6.8" stroke-linecap="round" stroke-linejoin="round"><path d="M275.8 86.6 L283.1 107 L291.5 81.6 L299 107 L313.8 68.2"/><path d="M316.6 87 C319.5 83.5 322.5 81 326 81 C331.5 81 334.8 84.5 334.8 90.5 V107.6"/><path d="M334.8 93.8 H323 C318 93.8 315 96.5 315 100.6 C315 104.8 318 107.6 322.5 107.6 C328 107.6 334.8 104 334.8 99" stroke-width="6.3"/><path d="M346.7 74.8 V101.5 Q346.7 107.6 353.1 107.6"/><path d="M361.5 75 V101.5 Q361.5 107.6 368.6 107.6"/><path d="M342.9 81.7 H370.5" stroke-width="6.6"/></g>
<ellipse cx="433.8" cy="89" rx="25.7" ry="28" fill="#00b4e0"/>
<text x="434.6" y="96.8" font-size="23" fill="#ffffff" text-anchor="middle" textLength="32" lengthAdjust="spacingAndGlyphs">Rte</text>
<g fill="#00b4e0" stroke="#00b4e0" stroke-width="0.25" font-size="11.8"><text x="468.3" y="78.7" textLength="47" lengthAdjust="spacingAndGlyphs">Le réseau</text><text x="468.3" y="92.1" textLength="61" lengthAdjust="spacingAndGlyphs">de transport</text><text x="468.3" y="105.1" textLength="57" lengthAdjust="spacingAndGlyphs">d’électricité</text></g>
<rect x="546.5" y="61.1" width="100.5" height="55.9" fill="#ffffff"/>
<rect x="553.2" y="68.3" width="7.3" height="7.3" fill="#233c8a"/>
<rect x="563.6" y="68.3" width="7.8" height="7.3" fill="#e1000f"/>
<g fill="#222" font-weight="bold" font-size="7.6"><text x="552.7" y="84.9" textLength="44" lengthAdjust="spacingAndGlyphs">RÉPUBLIQUE</text><text x="552.7" y="92.7" textLength="41" lengthAdjust="spacingAndGlyphs">FRANÇAISE</text></g>
<g fill="#777" font-size="4" font-style="italic"><text x="553" y="100">Liberté</text><text x="553" y="104.5">Égalité</text><text x="553" y="109">Fraternité</text></g>
<rect x="607.2" y="66.9" width="34.5" height="44.3" fill="#ffffff" stroke="#4a7ac8" stroke-width="1.2"/>
<text x="624.4" y="75.1" font-size="7" font-weight="bold" fill="#e2231a" text-anchor="middle" textLength="25" lengthAdjust="spacingAndGlyphs">ADEME</text>
<circle cx="624.2" cy="87" r="8.6" fill="#1f4fa6"/>
<path d="M621 81 q3 2 1 5 q-2 3 2 6 q2 2 1 4" stroke="#9fb8e0" stroke-width="1.3" fill="none"/>
<g fill="#e2231a" opacity="0.8"><rect x="612" y="99.6" width="25" height="1.5"/><rect x="612" y="103.2" width="25" height="1.5"/><rect x="612" y="106.8" width="25" height="1.5"/></g>
<path d="M169.3 135.2 H660.8 V258.6 H169.3 Z M172.9 138.8 H289.9 V189.0 H172.9 Z M172.9 194.7 H289.9 V252.6 H172.9 Z M294.1 138.8 H411.2 V189.0 H294.1 Z M294.1 194.7 H411.2 V252.6 H294.1 Z M416.8 138.8 H531.1 V189.0 H416.8 Z M416.8 194.7 H531.1 V252.6 H416.8 Z M538.0 138.8 H655.2 V189.0 H538.0 Z M538.0 194.7 H655.2 V252.6 H538.0 Z" fill="#d9d9d9" fill-rule="evenodd"/>
<g font-size="34" fill="#000" stroke="#000" stroke-width="0.6"><text x="221.9" y="175">J</text><text x="312" y="175">J</text><text x="345.3" y="175" stroke-width="0">+</text><text x="376.8" y="175" stroke-width="0">1</text><text x="434.2" y="175">J</text><text x="467.2" y="175" stroke-width="0">+</text><text x="499.5" y="175" font-weight="bold">2</text><text x="556" y="175">J</text><text x="589.1" y="175" stroke-width="0">+</text><text x="621.4" y="175">3</text></g>
<g transform="translate(180.2,195.2)"><rect x="0" y="0" width="106" height="54.5" fill="url(#tg)"/><path d="M15 0 H106 V15.4 C90 28 55 28 15 0 Z" fill="#00f0c8"/><path d="M28.6 0 C45 11 85 17 106 2 V0 Z" fill="#00a48c"/></g>
<g transform="translate(302.4,196.3)"><rect x="0" y="0" width="106" height="54.5" fill="url(#tg)"/><path d="M15 0 H106 V15.4 C90 28 55 28 15 0 Z" fill="#00f0c8"/><path d="M28.6 0 C45 11 85 17 106 2 V0 Z" fill="#00a48c"/></g>
<g transform="translate(423.8,196.5)"><rect x="0" y="0" width="106" height="54.5" fill="url(#tg)"/><path d="M15 0 H106 V15.4 C90 28 55 28 15 0 Z" fill="#00f0c8"/><path d="M28.6 0 C45 11 85 17 106 2 V0 Z" fill="#00a48c"/></g>
<g transform="translate(543.6,196.5)"><rect x="0" y="0" width="106" height="54.5" fill="url(#tg)"/><path d="M15 0 H106 V15.4 C90 28 55 28 15 0 Z" fill="#00f0c8"/><path d="M28.6 0 C45 11 85 17 106 2 V0 Z" fill="#00a48c"/></g>
<rect x="2321.8" y="1322" width="113" height="56" fill="#ffffff"/>
<path d="M2360.5 1343.5 A12.4 12.4 0 1 0 2361.1 1350.9 H2349" fill="none" stroke="#0b6db5" stroke-width="5.2" stroke-linecap="round" stroke-linejoin="round"/>
<path d="M2370.5 1350.8 C2368.5 1346 2370.5 1340.6 2376.2 1340.6 C2381.8 1340.6 2384.6 1346 2381.2 1351.2 L2371.5 1360.5" fill="none" stroke="#0b6db5" stroke-width="5.3" stroke-linecap="round" stroke-linejoin="round"/>
<path d="M2368.4 1363.1 L2372.4 1358.7 H2385.9 V1363.1 Z" fill="#0b6db5"/>
<path d="M2392.2 1324.6 L2391.8 1335.4 L2399.9 1339.2 L2389.2 1363.4 L2392.4 1340.9 L2383.5 1338.1 Z" fill="#e85a2a"/>
<path d="M2403.4 1339 H2424.4 L2418.7 1344.7 H2401 Z" fill="#f39220"/>
<path d="M2399 1348.2 H2418.3 L2412.6 1353.9 H2397 Z" fill="#f39220"/>
<path d="M2395 1357.2 H2416.5 L2410.8 1363.1 H2392.9 Z" fill="#f39220"/>
<text x="2393.3" y="1334.6" font-size="7.8" font-weight="bold" fill="#e85a2a" textLength="30.7" lengthAdjust="spacingAndGlyphs" opacity="0.9">FRANCE</text>
<text x="2339.5" y="1368.6" font-size="4.6" fill="#2a7fc4" textLength="74.4" lengthAdjust="spacingAndGlyphs" opacity="0.8">Optimisation des ressources énergétiques</text>
</svg></body></html>
